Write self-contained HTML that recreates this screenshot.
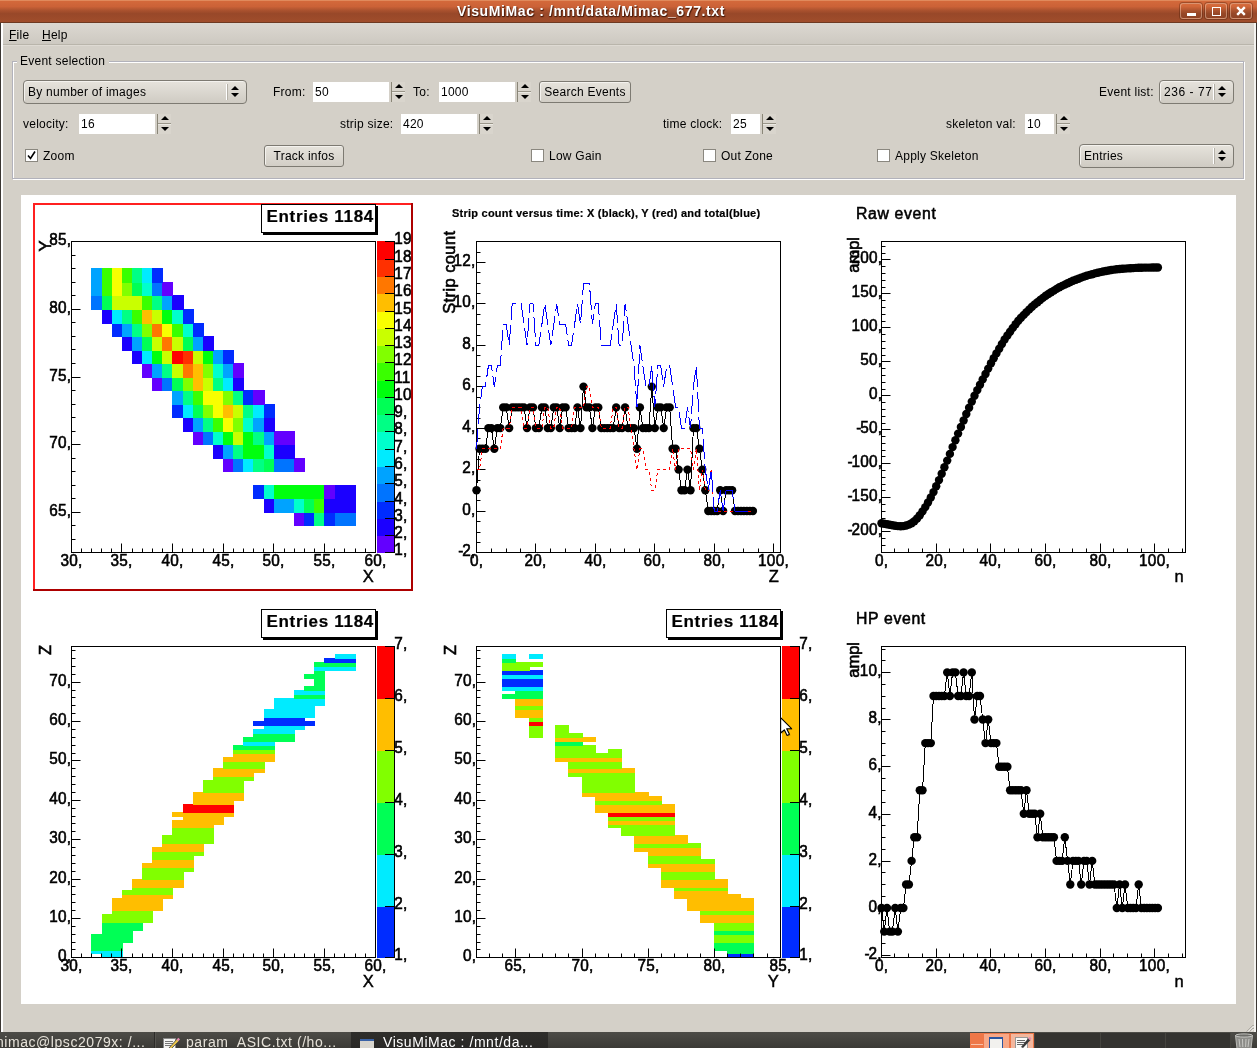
<!DOCTYPE html><html><head><meta charset="utf-8"><title>VisuMiMac</title><style>
html,body{margin:0;padding:0}
html{overflow:hidden;width:1257px;height:1048px}
body{width:1257px;height:1048px;position:relative;overflow:hidden;background:#d4d0c8;font-family:"Liberation Sans",sans-serif;font-size:12px;color:#000;letter-spacing:.25px}
.abs{position:absolute}
.lbl{position:absolute;white-space:pre;line-height:14px;height:14px}
.spin{position:absolute;height:20px;background:#fff}
.spin span{position:absolute;left:2px;top:3px;line-height:14px}
.arr{position:absolute;width:15px;height:20px}
.arr em{position:absolute;left:1px;top:0;width:13px;height:20px;background:#d9d5cd}
.arr i{position:absolute;left:4px;width:0;height:0;border-left:4px solid transparent;border-right:4px solid transparent}
.arr i.u{top:2px;border-bottom:4px solid #000}
.arr i.d{top:13px;border-top:4px solid #000}
.arr b{position:absolute;left:0;top:0;width:1px;height:20px;background:#8a8678}
.arr s{position:absolute;left:1px;top:9px;width:13px;height:1px;background:#9a968a}
.arr u{position:absolute;left:1px;top:10px;width:13px;height:1px;background:#eceae4}
.btn{position:absolute;box-sizing:border-box;border:1px solid #7d7a72;border-radius:3px;background:linear-gradient(#e6e3dc,#d2cec6);text-align:center;line-height:20px;box-shadow:inset 1px 1px 0 #f4f2ee}
.combo{position:absolute;box-sizing:border-box;border:1px solid #7d7a72;border-radius:4px;background:linear-gradient(#e6e3dc,#cfcbc3);box-shadow:inset 1px 1px 0 #f4f2ee}
.combo span{position:absolute;left:4px;top:4px;line-height:14px;white-space:pre}
.combo .sep{position:absolute;top:3px;bottom:3px;width:1px;background:#fff;border-right:1px solid #b5b1a8}
.combo i{position:absolute;width:0;height:0;border-left:4px solid transparent;border-right:4px solid transparent}
.combo i.u{border-bottom:4px solid #000}
.combo i.d{border-top:4px solid #000}
.chk{position:absolute;width:13px;height:13px;box-sizing:border-box;background:#fff;border:1px solid #8a877f}
</style></head><body><div id="w" style="position:absolute;left:0;top:0;width:1257px;height:1048px;overflow:hidden;will-change:transform">
<div class="abs" style="left:0;top:0;width:1257px;height:22px;background:linear-gradient(#d56a3b 0,#cb6237 30%,#a9512e 48%,#984829 62%,#a04d2b 100%)"></div>
<div class="abs" style="left:0;top:0;width:1257px;height:1px;background:#e08a5c"></div>
<div class="abs" style="left:0;top:1.5px;width:1182px;height:18px;text-align:center;color:#fff;font-weight:700;font-size:14px;line-height:18px;letter-spacing:.62px;text-shadow:1px 1px 1px #4a1c0c,0 1px 1px #4a1c0c">VisuMiMac : /mnt/data/Mimac_677.txt</div>
<div class="abs" style="left:1180px;top:3px;width:22px;height:16px;box-sizing:border-box;border:1px solid rgba(255,225,200,.42);border-radius:3px;background:linear-gradient(rgba(255,140,80,.18),rgba(60,20,0,.12));box-shadow:0 0 0 1px rgba(70,25,5,.35)"></div>
<div class="abs" style="left:1205px;top:3px;width:22px;height:16px;box-sizing:border-box;border:1px solid rgba(255,225,200,.42);border-radius:3px;background:linear-gradient(rgba(255,140,80,.18),rgba(60,20,0,.12));box-shadow:0 0 0 1px rgba(70,25,5,.35)"></div>
<div class="abs" style="left:1230px;top:3px;width:22px;height:16px;box-sizing:border-box;border:1px solid rgba(255,225,200,.42);border-radius:3px;background:linear-gradient(rgba(255,140,80,.18),rgba(60,20,0,.12));box-shadow:0 0 0 1px rgba(70,25,5,.35)"></div>
<div class="abs" style="left:1186.5px;top:12.5px;width:9px;height:3px;background:#fff"></div>
<div class="abs" style="left:1211.5px;top:7px;width:9px;height:8.5px;box-sizing:border-box;border:1.5px solid #fff"></div>
<svg class="abs" style="left:1235px;top:5px" width="12" height="12"><path d="M2.2 2.2 L9.8 9.8 M9.8 2.2 L2.2 9.8" stroke="#fff" stroke-width="2.4"/></svg>
<div class="abs" style="left:0;top:22px;width:1px;height:1010px;background:#3a3632"></div>
<div class="abs" style="left:1px;top:23px;width:2px;height:1009px;background:#fff"></div>
<div class="abs" style="left:1254px;top:23px;width:2px;height:1009px;background:#f4f3f0"></div>
<div class="abs" style="left:1256px;top:22px;width:1px;height:1010px;background:#3a3632"></div>
<div class="abs" style="left:0;top:22px;width:1257px;height:1px;background:#6e3a22"></div>
<div class="abs" style="left:3px;top:23px;width:1251px;height:21px;background:linear-gradient(#dcd8d1,#cdc9c1)"></div>
<div class="lbl" style="left:9px;top:28px"><u>F</u>ile</div>
<div class="lbl" style="left:42px;top:28px"><u>H</u>elp</div>
<div class="abs" style="left:3px;top:44px;width:1251px;height:1px;background:#b9b5ab"></div>
<div class="abs" style="left:3px;top:45px;width:1251px;height:1px;background:#dedad3"></div>
<div class="abs" style="left:12px;top:61px;width:1232px;height:118px;box-sizing:border-box;border:1px solid #b2b2bb;box-shadow:1px 1px 0 #fff, inset 1px 1px 0 #fff"></div>
<div class="lbl" style="left:17px;top:54px;padding:0 4px 0 3px;background:#d4d0c8">Event selection</div>
<div class="combo" style="left:23px;top:80px;width:224px;height:24px"><span>By number of images</span><div class="sep" style="left:202px"></div><i class="u" style="left:207px;top:5px"></i><i class="d" style="left:207px;top:12px"></i></div>
<div class="lbl" style="left:273px;top:85px">From:</div>
<div class="spin" style="left:313px;top:82px;width:76px"><span>50</span></div>
<div class="arr" style="left:391px;top:82px"><em></em><b></b><u></u><s></s><i class="u"></i><i class="d"></i></div>
<div class="lbl" style="left:413px;top:85px">To:</div>
<div class="spin" style="left:439px;top:82px;width:76px"><span>1000</span></div>
<div class="arr" style="left:517px;top:82px"><em></em><b></b><u></u><s></s><i class="u"></i><i class="d"></i></div>
<div class="btn" style="left:539px;top:81px;width:92px;height:22px;line-height:20px">Search Events</div>
<div class="lbl" style="left:1099px;top:85px">Event list:</div>
<div class="combo" style="left:1159px;top:80px;width:75px;height:24px"><span><span style="position:static;letter-spacing:.55px">236 - 77</span></span><div class="sep" style="left:53px"></div><i class="u" style="left:58px;top:5px"></i><i class="d" style="left:58px;top:12px"></i></div>
<div class="lbl" style="left:23px;top:117px">velocity:</div>
<div class="spin" style="left:79px;top:114px;width:76px"><span>16</span></div>
<div class="arr" style="left:157px;top:114px"><em></em><b></b><u></u><s></s><i class="u"></i><i class="d"></i></div>
<div class="lbl" style="left:340px;top:117px">strip size:</div>
<div class="spin" style="left:401px;top:114px;width:76px"><span>420</span></div>
<div class="arr" style="left:479px;top:114px"><em></em><b></b><u></u><s></s><i class="u"></i><i class="d"></i></div>
<div class="lbl" style="left:663px;top:117px">time clock:</div>
<div class="spin" style="left:731px;top:114px;width:29px"><span>25</span></div>
<div class="arr" style="left:762px;top:114px"><em></em><b></b><u></u><s></s><i class="u"></i><i class="d"></i></div>
<div class="lbl" style="left:946px;top:117px">skeleton val:</div>
<div class="spin" style="left:1025px;top:114px;width:29px"><span>10</span></div>
<div class="arr" style="left:1056px;top:114px"><em></em><b></b><u></u><s></s><i class="u"></i><i class="d"></i></div>
<div class="chk" style="left:25px;top:149px"><svg width="11" height="11" style="position:absolute;left:0;top:0"><path d="M2 5.5 L4.5 8.5 L9 1.5" stroke="#000" stroke-width="1.6" fill="none"/></svg></div>
<div class="lbl" style="left:43px;top:149px">Zoom</div>
<div class="btn" style="left:264px;top:145px;width:80px;height:22px;line-height:20px">Track infos</div>
<div class="chk" style="left:531px;top:149px"></div>
<div class="lbl" style="left:549px;top:149px">Low Gain</div>
<div class="chk" style="left:703px;top:149px"></div>
<div class="lbl" style="left:721px;top:149px">Out Zone</div>
<div class="chk" style="left:877px;top:149px"></div>
<div class="lbl" style="left:895px;top:149px">Apply Skeleton</div>
<div class="combo" style="left:1079px;top:144px;width:155px;height:24px"><span>Entries</span><div class="sep" style="left:133px"></div><i class="u" style="left:138px;top:5px"></i><i class="d" style="left:138px;top:12px"></i></div>
<div class="abs" style="left:21px;top:195px;width:1215px;height:809px;background:#fff"></div>
<svg width="1257" height="1048" viewBox="0 0 1257 1048" style="position:absolute;left:0;top:0;font-family:'Liberation Sans', sans-serif" fill="#000"><defs>
<clipPath id="pad0"><rect x="33" y="203" width="378" height="390"/></clipPath>
<clipPath id="pad1"><rect x="438" y="203" width="380" height="390"/></clipPath>
<clipPath id="pad2"><rect x="843" y="203" width="380" height="390"/></clipPath>
<clipPath id="pad3"><rect x="33" y="607" width="380" height="390"/></clipPath>
<clipPath id="pad4"><rect x="438" y="607" width="380" height="390"/></clipPath>
<clipPath id="pad5"><rect x="843" y="607" width="380" height="390"/></clipPath>
</defs>
<g shape-rendering="crispEdges">
<rect x="33" y="203" width="380" height="388" fill="#fff" />
<rect x="33" y="203" width="380" height="2" fill="#ff2020" />
<rect x="33" y="203" width="2" height="388" fill="#ff2020" />
<rect x="33" y="589" width="380" height="2" fill="#ad0000" />
<rect x="411" y="203" width="2" height="388" fill="#ad0000" />
</g>
<rect x="71.5" y="241.5" width="304" height="311" fill="#fff" stroke="#000" stroke-width="1"/>
<g shape-rendering="crispEdges">
<rect x="294" y="512" width="11" height="14" fill="#6300ff" />
<rect x="304" y="512" width="11" height="14" fill="#002cff" />
<rect x="314" y="512" width="11" height="14" fill="#00ff85" />
<rect x="324" y="512" width="12" height="14" fill="#002cff" />
<rect x="335" y="512" width="11" height="14" fill="#0074ff" />
<rect x="345" y="512" width="11" height="14" fill="#0074ff" />
<rect x="264" y="498" width="11" height="15" fill="#1b00ff" />
<rect x="274" y="498" width="11" height="15" fill="#00a3ff" />
<rect x="284" y="498" width="11" height="15" fill="#00a3ff" />
<rect x="294" y="498" width="11" height="15" fill="#00ffcc" />
<rect x="304" y="498" width="11" height="15" fill="#00ff55" />
<rect x="314" y="498" width="11" height="15" fill="#3aff00" />
<rect x="324" y="498" width="12" height="15" fill="#1b00ff" />
<rect x="335" y="498" width="11" height="15" fill="#1b00ff" />
<rect x="345" y="498" width="11" height="15" fill="#1b00ff" />
<rect x="253" y="485" width="12" height="14" fill="#002cff" />
<rect x="264" y="485" width="11" height="14" fill="#00ffcc" />
<rect x="274" y="485" width="11" height="14" fill="#00ff0e" />
<rect x="284" y="485" width="11" height="14" fill="#00ff0e" />
<rect x="294" y="485" width="11" height="14" fill="#00ff0e" />
<rect x="304" y="485" width="11" height="14" fill="#00ff0e" />
<rect x="314" y="485" width="11" height="14" fill="#00ff0e" />
<rect x="324" y="485" width="12" height="14" fill="#6300ff" />
<rect x="335" y="485" width="11" height="14" fill="#1b00ff" />
<rect x="345" y="485" width="11" height="14" fill="#1b00ff" />
<rect x="223" y="458" width="11" height="14" fill="#6300ff" />
<rect x="233" y="458" width="11" height="14" fill="#0074ff" />
<rect x="243" y="458" width="11" height="14" fill="#00ebff" />
<rect x="253" y="458" width="12" height="14" fill="#00ff85" />
<rect x="264" y="458" width="11" height="14" fill="#00ff55" />
<rect x="274" y="458" width="11" height="14" fill="#0074ff" />
<rect x="284" y="458" width="11" height="14" fill="#0074ff" />
<rect x="294" y="458" width="11" height="14" fill="#6300ff" />
<rect x="213" y="444" width="11" height="15" fill="#1b00ff" />
<rect x="223" y="444" width="11" height="15" fill="#00a3ff" />
<rect x="233" y="444" width="11" height="15" fill="#00ff85" />
<rect x="243" y="444" width="11" height="15" fill="#00ff0e" />
<rect x="253" y="444" width="12" height="15" fill="#00ff0e" />
<rect x="264" y="444" width="11" height="15" fill="#00ffcc" />
<rect x="274" y="444" width="11" height="15" fill="#1b00ff" />
<rect x="284" y="444" width="11" height="15" fill="#1b00ff" />
<rect x="193" y="431" width="11" height="14" fill="#6300ff" />
<rect x="203" y="431" width="11" height="14" fill="#0074ff" />
<rect x="213" y="431" width="11" height="14" fill="#00ffcc" />
<rect x="223" y="431" width="11" height="14" fill="#00ff0e" />
<rect x="233" y="431" width="11" height="14" fill="#c9ff00" />
<rect x="243" y="431" width="11" height="14" fill="#00ff0e" />
<rect x="253" y="431" width="12" height="14" fill="#00ff85" />
<rect x="264" y="431" width="11" height="14" fill="#00a3ff" />
<rect x="274" y="431" width="11" height="14" fill="#6300ff" />
<rect x="284" y="431" width="11" height="14" fill="#6300ff" />
<rect x="183" y="417" width="11" height="15" fill="#1b00ff" />
<rect x="193" y="417" width="11" height="15" fill="#00a3ff" />
<rect x="203" y="417" width="11" height="15" fill="#00ff85" />
<rect x="213" y="417" width="11" height="15" fill="#3aff00" />
<rect x="223" y="417" width="11" height="15" fill="#f8ff00" />
<rect x="233" y="417" width="11" height="15" fill="#81ff00" />
<rect x="243" y="417" width="11" height="15" fill="#00ffcc" />
<rect x="253" y="417" width="12" height="15" fill="#00a3ff" />
<rect x="264" y="417" width="11" height="15" fill="#1b00ff" />
<rect x="172" y="404" width="12" height="14" fill="#002cff" />
<rect x="183" y="404" width="11" height="14" fill="#00ebff" />
<rect x="193" y="404" width="11" height="14" fill="#00ff55" />
<rect x="203" y="404" width="11" height="14" fill="#81ff00" />
<rect x="213" y="404" width="11" height="14" fill="#f8ff00" />
<rect x="223" y="404" width="11" height="14" fill="#ffbe00" />
<rect x="233" y="404" width="11" height="14" fill="#c9ff00" />
<rect x="243" y="404" width="11" height="14" fill="#00ff85" />
<rect x="253" y="404" width="12" height="14" fill="#00ebff" />
<rect x="264" y="404" width="11" height="14" fill="#002cff" />
<rect x="172" y="390" width="12" height="15" fill="#00a3ff" />
<rect x="183" y="390" width="11" height="15" fill="#00ff85" />
<rect x="193" y="390" width="11" height="15" fill="#3aff00" />
<rect x="203" y="390" width="11" height="15" fill="#f8ff00" />
<rect x="213" y="390" width="11" height="15" fill="#f8ff00" />
<rect x="223" y="390" width="11" height="15" fill="#81ff00" />
<rect x="233" y="390" width="11" height="15" fill="#00ff85" />
<rect x="243" y="390" width="11" height="15" fill="#002cff" />
<rect x="253" y="390" width="12" height="15" fill="#6300ff" />
<rect x="152" y="377" width="11" height="14" fill="#6300ff" />
<rect x="162" y="377" width="11" height="14" fill="#0074ff" />
<rect x="172" y="377" width="12" height="14" fill="#00ff55" />
<rect x="183" y="377" width="11" height="14" fill="#81ff00" />
<rect x="193" y="377" width="11" height="14" fill="#ffbe00" />
<rect x="203" y="377" width="11" height="14" fill="#c9ff00" />
<rect x="213" y="377" width="11" height="14" fill="#00ff85" />
<rect x="223" y="377" width="11" height="14" fill="#00ebff" />
<rect x="233" y="377" width="11" height="14" fill="#1b00ff" />
<rect x="142" y="363" width="11" height="15" fill="#6300ff" />
<rect x="152" y="363" width="11" height="15" fill="#00a3ff" />
<rect x="162" y="363" width="11" height="15" fill="#00ff85" />
<rect x="172" y="363" width="12" height="15" fill="#c9ff00" />
<rect x="183" y="363" width="11" height="15" fill="#ff7700" />
<rect x="193" y="363" width="11" height="15" fill="#ffbe00" />
<rect x="203" y="363" width="11" height="15" fill="#81ff00" />
<rect x="213" y="363" width="11" height="15" fill="#00ffcc" />
<rect x="223" y="363" width="11" height="15" fill="#00a3ff" />
<rect x="233" y="363" width="11" height="15" fill="#6300ff" />
<rect x="132" y="350" width="11" height="14" fill="#1b00ff" />
<rect x="142" y="350" width="11" height="14" fill="#00ebff" />
<rect x="152" y="350" width="11" height="14" fill="#00ff0e" />
<rect x="162" y="350" width="11" height="14" fill="#c9ff00" />
<rect x="172" y="350" width="12" height="14" fill="#ff0000" />
<rect x="183" y="350" width="11" height="14" fill="#ff3000" />
<rect x="193" y="350" width="11" height="14" fill="#c9ff00" />
<rect x="203" y="350" width="11" height="14" fill="#00ff0e" />
<rect x="213" y="350" width="11" height="14" fill="#00a3ff" />
<rect x="223" y="350" width="11" height="14" fill="#002cff" />
<rect x="122" y="336" width="11" height="15" fill="#1b00ff" />
<rect x="132" y="336" width="11" height="15" fill="#00a3ff" />
<rect x="142" y="336" width="11" height="15" fill="#00ff55" />
<rect x="152" y="336" width="11" height="15" fill="#c9ff00" />
<rect x="162" y="336" width="11" height="15" fill="#ff7700" />
<rect x="172" y="336" width="12" height="15" fill="#c9ff00" />
<rect x="183" y="336" width="11" height="15" fill="#00ff55" />
<rect x="193" y="336" width="11" height="15" fill="#00a3ff" />
<rect x="203" y="336" width="11" height="15" fill="#1b00ff" />
<rect x="112" y="323" width="11" height="14" fill="#002cff" />
<rect x="122" y="323" width="11" height="14" fill="#00a3ff" />
<rect x="132" y="323" width="11" height="14" fill="#00ff85" />
<rect x="142" y="323" width="11" height="14" fill="#81ff00" />
<rect x="152" y="323" width="11" height="14" fill="#ff7700" />
<rect x="162" y="323" width="11" height="14" fill="#f8ff00" />
<rect x="172" y="323" width="12" height="14" fill="#3aff00" />
<rect x="183" y="323" width="11" height="14" fill="#00ffcc" />
<rect x="193" y="323" width="11" height="14" fill="#002cff" />
<rect x="102" y="309" width="11" height="15" fill="#1b00ff" />
<rect x="112" y="309" width="11" height="15" fill="#00ebff" />
<rect x="122" y="309" width="11" height="15" fill="#00ff85" />
<rect x="132" y="309" width="11" height="15" fill="#3aff00" />
<rect x="142" y="309" width="11" height="15" fill="#ffbe00" />
<rect x="152" y="309" width="11" height="15" fill="#c9ff00" />
<rect x="162" y="309" width="11" height="15" fill="#00ff0e" />
<rect x="172" y="309" width="12" height="15" fill="#00ffcc" />
<rect x="183" y="309" width="11" height="15" fill="#002cff" />
<rect x="91" y="295" width="12" height="15" fill="#0074ff" />
<rect x="102" y="295" width="11" height="15" fill="#00ff55" />
<rect x="112" y="295" width="11" height="15" fill="#c9ff00" />
<rect x="122" y="295" width="11" height="15" fill="#c9ff00" />
<rect x="132" y="295" width="11" height="15" fill="#c9ff00" />
<rect x="142" y="295" width="11" height="15" fill="#3aff00" />
<rect x="152" y="295" width="11" height="15" fill="#00ff85" />
<rect x="162" y="295" width="11" height="15" fill="#00a3ff" />
<rect x="172" y="295" width="12" height="15" fill="#1b00ff" />
<rect x="91" y="282" width="12" height="14" fill="#00a3ff" />
<rect x="102" y="282" width="11" height="14" fill="#3aff00" />
<rect x="112" y="282" width="11" height="14" fill="#f8ff00" />
<rect x="122" y="282" width="11" height="14" fill="#81ff00" />
<rect x="132" y="282" width="11" height="14" fill="#00ff55" />
<rect x="142" y="282" width="11" height="14" fill="#00ffcc" />
<rect x="152" y="282" width="11" height="14" fill="#0074ff" />
<rect x="162" y="282" width="11" height="14" fill="#6300ff" />
<rect x="91" y="268" width="12" height="15" fill="#00a3ff" />
<rect x="102" y="268" width="11" height="15" fill="#3aff00" />
<rect x="112" y="268" width="11" height="15" fill="#f8ff00" />
<rect x="122" y="268" width="11" height="15" fill="#3aff00" />
<rect x="132" y="268" width="11" height="15" fill="#00ff85" />
<rect x="142" y="268" width="11" height="15" fill="#00ebff" />
<rect x="152" y="268" width="11" height="15" fill="#002cff" />
</g>
<rect x="71.5" y="241.5" width="304" height="311" fill="none" stroke="#000" stroke-width="1"/>
<line x1="71.5" y1="552.5" x2="71.5" y2="543.5" stroke="#000" stroke-width="1" />
<text transform="translate(71.5,566) scale(0.93,1)" font-size="16.5" text-anchor="middle" stroke="#000" stroke-width="0.6">30,</text>
<line x1="81.5" y1="552.5" x2="81.5" y2="548.5" stroke="#000" stroke-width="1" />
<line x1="91.5" y1="552.5" x2="91.5" y2="548.5" stroke="#000" stroke-width="1" />
<line x1="101.5" y1="552.5" x2="101.5" y2="548.5" stroke="#000" stroke-width="1" />
<line x1="111.5" y1="552.5" x2="111.5" y2="548.5" stroke="#000" stroke-width="1" />
<line x1="121.5" y1="552.5" x2="121.5" y2="543.5" stroke="#000" stroke-width="1" />
<text transform="translate(121.5,566) scale(0.93,1)" font-size="16.5" text-anchor="middle" stroke="#000" stroke-width="0.6">35,</text>
<line x1="132.5" y1="552.5" x2="132.5" y2="548.5" stroke="#000" stroke-width="1" />
<line x1="142.5" y1="552.5" x2="142.5" y2="548.5" stroke="#000" stroke-width="1" />
<line x1="152.5" y1="552.5" x2="152.5" y2="548.5" stroke="#000" stroke-width="1" />
<line x1="162.5" y1="552.5" x2="162.5" y2="548.5" stroke="#000" stroke-width="1" />
<line x1="172.5" y1="552.5" x2="172.5" y2="543.5" stroke="#000" stroke-width="1" />
<text transform="translate(172.5,566) scale(0.93,1)" font-size="16.5" text-anchor="middle" stroke="#000" stroke-width="0.6">40,</text>
<line x1="182.5" y1="552.5" x2="182.5" y2="548.5" stroke="#000" stroke-width="1" />
<line x1="192.5" y1="552.5" x2="192.5" y2="548.5" stroke="#000" stroke-width="1" />
<line x1="203.5" y1="552.5" x2="203.5" y2="548.5" stroke="#000" stroke-width="1" />
<line x1="213.5" y1="552.5" x2="213.5" y2="548.5" stroke="#000" stroke-width="1" />
<line x1="223.5" y1="552.5" x2="223.5" y2="543.5" stroke="#000" stroke-width="1" />
<text transform="translate(223.5,566) scale(0.93,1)" font-size="16.5" text-anchor="middle" stroke="#000" stroke-width="0.6">45,</text>
<line x1="233.5" y1="552.5" x2="233.5" y2="548.5" stroke="#000" stroke-width="1" />
<line x1="243.5" y1="552.5" x2="243.5" y2="548.5" stroke="#000" stroke-width="1" />
<line x1="253.5" y1="552.5" x2="253.5" y2="548.5" stroke="#000" stroke-width="1" />
<line x1="263.5" y1="552.5" x2="263.5" y2="548.5" stroke="#000" stroke-width="1" />
<line x1="273.5" y1="552.5" x2="273.5" y2="543.5" stroke="#000" stroke-width="1" />
<text transform="translate(273.5,566) scale(0.93,1)" font-size="16.5" text-anchor="middle" stroke="#000" stroke-width="0.6">50,</text>
<line x1="284.5" y1="552.5" x2="284.5" y2="548.5" stroke="#000" stroke-width="1" />
<line x1="294.5" y1="552.5" x2="294.5" y2="548.5" stroke="#000" stroke-width="1" />
<line x1="304.5" y1="552.5" x2="304.5" y2="548.5" stroke="#000" stroke-width="1" />
<line x1="314.5" y1="552.5" x2="314.5" y2="548.5" stroke="#000" stroke-width="1" />
<line x1="324.5" y1="552.5" x2="324.5" y2="543.5" stroke="#000" stroke-width="1" />
<text transform="translate(324.5,566) scale(0.93,1)" font-size="16.5" text-anchor="middle" stroke="#000" stroke-width="0.6">55,</text>
<line x1="334.5" y1="552.5" x2="334.5" y2="548.5" stroke="#000" stroke-width="1" />
<line x1="344.5" y1="552.5" x2="344.5" y2="548.5" stroke="#000" stroke-width="1" />
<line x1="355.5" y1="552.5" x2="355.5" y2="548.5" stroke="#000" stroke-width="1" />
<line x1="365.5" y1="552.5" x2="365.5" y2="548.5" stroke="#000" stroke-width="1" />
<line x1="375.5" y1="552.5" x2="375.5" y2="543.5" stroke="#000" stroke-width="1" />
<text transform="translate(375.5,566) scale(0.93,1)" font-size="16.5" text-anchor="middle" stroke="#000" stroke-width="0.6">60,</text>
<text x="374" y="582" font-size="16.5" text-anchor="end" stroke="#000" stroke-width="0.45">X</text>
<line x1="71.5" y1="552.5" x2="75.5" y2="552.5" stroke="#000" stroke-width="1" />
<line x1="71.5" y1="539.5" x2="75.5" y2="539.5" stroke="#000" stroke-width="1" />
<line x1="71.5" y1="525.5" x2="75.5" y2="525.5" stroke="#000" stroke-width="1" />
<line x1="71.5" y1="512.5" x2="80.5" y2="512.5" stroke="#000" stroke-width="1" />
<text transform="translate(71.2,515.7) scale(0.93,1)" font-size="16.5" text-anchor="end" stroke="#000" stroke-width="0.6">65,</text>
<line x1="71.5" y1="498.5" x2="75.5" y2="498.5" stroke="#000" stroke-width="1" />
<line x1="71.5" y1="485.5" x2="75.5" y2="485.5" stroke="#000" stroke-width="1" />
<line x1="71.5" y1="471.5" x2="75.5" y2="471.5" stroke="#000" stroke-width="1" />
<line x1="71.5" y1="458.5" x2="75.5" y2="458.5" stroke="#000" stroke-width="1" />
<line x1="71.5" y1="444.5" x2="80.5" y2="444.5" stroke="#000" stroke-width="1" />
<text transform="translate(71.2,447.7) scale(0.93,1)" font-size="16.5" text-anchor="end" stroke="#000" stroke-width="0.6">70,</text>
<line x1="71.5" y1="431.5" x2="75.5" y2="431.5" stroke="#000" stroke-width="1" />
<line x1="71.5" y1="417.5" x2="75.5" y2="417.5" stroke="#000" stroke-width="1" />
<line x1="71.5" y1="404.5" x2="75.5" y2="404.5" stroke="#000" stroke-width="1" />
<line x1="71.5" y1="390.5" x2="75.5" y2="390.5" stroke="#000" stroke-width="1" />
<line x1="71.5" y1="377.5" x2="80.5" y2="377.5" stroke="#000" stroke-width="1" />
<text transform="translate(71.2,380.7) scale(0.93,1)" font-size="16.5" text-anchor="end" stroke="#000" stroke-width="0.6">75,</text>
<line x1="71.5" y1="363.5" x2="75.5" y2="363.5" stroke="#000" stroke-width="1" />
<line x1="71.5" y1="349.5" x2="75.5" y2="349.5" stroke="#000" stroke-width="1" />
<line x1="71.5" y1="336.5" x2="75.5" y2="336.5" stroke="#000" stroke-width="1" />
<line x1="71.5" y1="322.5" x2="75.5" y2="322.5" stroke="#000" stroke-width="1" />
<line x1="71.5" y1="309.5" x2="80.5" y2="309.5" stroke="#000" stroke-width="1" />
<text transform="translate(71.2,312.7) scale(0.93,1)" font-size="16.5" text-anchor="end" stroke="#000" stroke-width="0.6">80,</text>
<line x1="71.5" y1="295.5" x2="75.5" y2="295.5" stroke="#000" stroke-width="1" />
<line x1="71.5" y1="282.5" x2="75.5" y2="282.5" stroke="#000" stroke-width="1" />
<line x1="71.5" y1="268.5" x2="75.5" y2="268.5" stroke="#000" stroke-width="1" />
<line x1="71.5" y1="255.5" x2="75.5" y2="255.5" stroke="#000" stroke-width="1" />
<line x1="71.5" y1="241.5" x2="80.5" y2="241.5" stroke="#000" stroke-width="1" />
<text transform="translate(71.2,244.7) scale(0.93,1)" font-size="16.5" text-anchor="end" stroke="#000" stroke-width="0.6">85,</text>
<text transform="translate(50.5,240.5) rotate(-90)" font-size="16.5" text-anchor="end" stroke="#000" stroke-width="0.6" letter-spacing="0">Y</text>
<g shape-rendering="crispEdges">
<rect x="377" y="535" width="17" height="18" fill="#6300ff" />
<rect x="377" y="518" width="17" height="18" fill="#1b00ff" />
<rect x="377" y="501" width="17" height="18" fill="#002cff" />
<rect x="377" y="483" width="17" height="19" fill="#0074ff" />
<rect x="377" y="466" width="17" height="18" fill="#00a3ff" />
<rect x="377" y="449" width="17" height="18" fill="#00ebff" />
<rect x="377" y="431" width="17" height="19" fill="#00ffcc" />
<rect x="377" y="414" width="17" height="18" fill="#00ff85" />
<rect x="377" y="397" width="17" height="18" fill="#00ff55" />
<rect x="377" y="380" width="17" height="18" fill="#00ff0e" />
<rect x="377" y="362" width="17" height="19" fill="#3aff00" />
<rect x="377" y="345" width="17" height="18" fill="#81ff00" />
<rect x="377" y="328" width="17" height="18" fill="#c9ff00" />
<rect x="377" y="311" width="17" height="18" fill="#f8ff00" />
<rect x="377" y="293" width="17" height="19" fill="#ffbe00" />
<rect x="377" y="276" width="17" height="18" fill="#ff7700" />
<rect x="377" y="259" width="17" height="18" fill="#ff3000" />
<rect x="377" y="241" width="17" height="19" fill="#ff0000" />
</g>
<line x1="394.5" y1="241" x2="394.5" y2="553" stroke="#000" stroke-width="1" />
<g clip-path="url(#pad0)">
<line x1="385" y1="552.5" x2="394.5" y2="552.5" stroke="#000" stroke-width="1" />
<text transform="translate(394.2,555.4) scale(0.93,1)" font-size="16.5" text-anchor="start" stroke="#000" stroke-width="0.6">1,</text>
<line x1="385" y1="535.5" x2="394.5" y2="535.5" stroke="#000" stroke-width="1" />
<text transform="translate(394.2,538.4) scale(0.93,1)" font-size="16.5" text-anchor="start" stroke="#000" stroke-width="0.6">2,</text>
<line x1="385" y1="518.5" x2="394.5" y2="518.5" stroke="#000" stroke-width="1" />
<text transform="translate(394.2,521.4) scale(0.93,1)" font-size="16.5" text-anchor="start" stroke="#000" stroke-width="0.6">3,</text>
<line x1="385" y1="501.5" x2="394.5" y2="501.5" stroke="#000" stroke-width="1" />
<text transform="translate(394.2,504.4) scale(0.93,1)" font-size="16.5" text-anchor="start" stroke="#000" stroke-width="0.6">4,</text>
<line x1="385" y1="483.5" x2="394.5" y2="483.5" stroke="#000" stroke-width="1" />
<text transform="translate(394.2,486.4) scale(0.93,1)" font-size="16.5" text-anchor="start" stroke="#000" stroke-width="0.6">5,</text>
<line x1="385" y1="466.5" x2="394.5" y2="466.5" stroke="#000" stroke-width="1" />
<text transform="translate(394.2,469.4) scale(0.93,1)" font-size="16.5" text-anchor="start" stroke="#000" stroke-width="0.6">6,</text>
<line x1="385" y1="449.5" x2="394.5" y2="449.5" stroke="#000" stroke-width="1" />
<text transform="translate(394.2,452.4) scale(0.93,1)" font-size="16.5" text-anchor="start" stroke="#000" stroke-width="0.6">7,</text>
<line x1="385" y1="431.5" x2="394.5" y2="431.5" stroke="#000" stroke-width="1" />
<text transform="translate(394.2,434.4) scale(0.93,1)" font-size="16.5" text-anchor="start" stroke="#000" stroke-width="0.6">8,</text>
<line x1="385" y1="414.5" x2="394.5" y2="414.5" stroke="#000" stroke-width="1" />
<text transform="translate(394.2,417.4) scale(0.93,1)" font-size="16.5" text-anchor="start" stroke="#000" stroke-width="0.6">9,</text>
<line x1="385" y1="397.5" x2="394.5" y2="397.5" stroke="#000" stroke-width="1" />
<text transform="translate(394.2,400.4) scale(0.93,1)" font-size="16.5" text-anchor="start" stroke="#000" stroke-width="0.6">10</text>
<line x1="385" y1="380.5" x2="394.5" y2="380.5" stroke="#000" stroke-width="1" />
<text transform="translate(394.2,383.4) scale(0.93,1)" font-size="16.5" text-anchor="start" stroke="#000" stroke-width="0.6">11</text>
<line x1="385" y1="362.5" x2="394.5" y2="362.5" stroke="#000" stroke-width="1" />
<text transform="translate(394.2,365.4) scale(0.93,1)" font-size="16.5" text-anchor="start" stroke="#000" stroke-width="0.6">12</text>
<line x1="385" y1="345.5" x2="394.5" y2="345.5" stroke="#000" stroke-width="1" />
<text transform="translate(394.2,348.4) scale(0.93,1)" font-size="16.5" text-anchor="start" stroke="#000" stroke-width="0.6">13</text>
<line x1="385" y1="328.5" x2="394.5" y2="328.5" stroke="#000" stroke-width="1" />
<text transform="translate(394.2,331.4) scale(0.93,1)" font-size="16.5" text-anchor="start" stroke="#000" stroke-width="0.6">14</text>
<line x1="385" y1="311.5" x2="394.5" y2="311.5" stroke="#000" stroke-width="1" />
<text transform="translate(394.2,314.4) scale(0.93,1)" font-size="16.5" text-anchor="start" stroke="#000" stroke-width="0.6">15</text>
<line x1="385" y1="293.5" x2="394.5" y2="293.5" stroke="#000" stroke-width="1" />
<text transform="translate(394.2,296.4) scale(0.93,1)" font-size="16.5" text-anchor="start" stroke="#000" stroke-width="0.6">16</text>
<line x1="385" y1="276.5" x2="394.5" y2="276.5" stroke="#000" stroke-width="1" />
<text transform="translate(394.2,279.4) scale(0.93,1)" font-size="16.5" text-anchor="start" stroke="#000" stroke-width="0.6">17</text>
<line x1="385" y1="259.5" x2="394.5" y2="259.5" stroke="#000" stroke-width="1" />
<text transform="translate(394.2,262.4) scale(0.93,1)" font-size="16.5" text-anchor="start" stroke="#000" stroke-width="0.6">18</text>
<line x1="385" y1="241.5" x2="394.5" y2="241.5" stroke="#000" stroke-width="1" />
<text transform="translate(394.2,244.4) scale(0.93,1)" font-size="16.5" text-anchor="start" stroke="#000" stroke-width="0.6">19</text>
</g>
<rect x="263" y="206" width="115" height="29" fill="#000" shape-rendering="crispEdges"/>
<rect x="261.5" y="204.5" width="114" height="28" fill="#fff" stroke="#000" stroke-width="1"/>
<text x="266.5" y="221.7" font-size="17" text-anchor="start" font-weight="700" letter-spacing="0.68" stroke="#000" stroke-width="0.2" >Entries 1184</text>
<rect x="476.5" y="241.5" width="304" height="311" fill="#fff" stroke="#000" stroke-width="1"/>
<line x1="476.5" y1="552.5" x2="476.5" y2="543.5" stroke="#000" stroke-width="1" />
<text transform="translate(476.5,566) scale(0.93,1)" font-size="16.5" text-anchor="middle" stroke="#000" stroke-width="0.6">0,</text>
<line x1="491.5" y1="552.5" x2="491.5" y2="548.5" stroke="#000" stroke-width="1" />
<line x1="506.5" y1="552.5" x2="506.5" y2="548.5" stroke="#000" stroke-width="1" />
<line x1="520.5" y1="552.5" x2="520.5" y2="548.5" stroke="#000" stroke-width="1" />
<line x1="535.5" y1="552.5" x2="535.5" y2="543.5" stroke="#000" stroke-width="1" />
<text transform="translate(535.5,566) scale(0.93,1)" font-size="16.5" text-anchor="middle" stroke="#000" stroke-width="0.6">20,</text>
<line x1="550.5" y1="552.5" x2="550.5" y2="548.5" stroke="#000" stroke-width="1" />
<line x1="565.5" y1="552.5" x2="565.5" y2="548.5" stroke="#000" stroke-width="1" />
<line x1="580.5" y1="552.5" x2="580.5" y2="548.5" stroke="#000" stroke-width="1" />
<line x1="595.5" y1="552.5" x2="595.5" y2="543.5" stroke="#000" stroke-width="1" />
<text transform="translate(595.5,566) scale(0.93,1)" font-size="16.5" text-anchor="middle" stroke="#000" stroke-width="0.6">40,</text>
<line x1="610.5" y1="552.5" x2="610.5" y2="548.5" stroke="#000" stroke-width="1" />
<line x1="624.5" y1="552.5" x2="624.5" y2="548.5" stroke="#000" stroke-width="1" />
<line x1="639.5" y1="552.5" x2="639.5" y2="548.5" stroke="#000" stroke-width="1" />
<line x1="654.5" y1="552.5" x2="654.5" y2="543.5" stroke="#000" stroke-width="1" />
<text transform="translate(654.5,566) scale(0.93,1)" font-size="16.5" text-anchor="middle" stroke="#000" stroke-width="0.6">60,</text>
<line x1="669.5" y1="552.5" x2="669.5" y2="548.5" stroke="#000" stroke-width="1" />
<line x1="684.5" y1="552.5" x2="684.5" y2="548.5" stroke="#000" stroke-width="1" />
<line x1="699.5" y1="552.5" x2="699.5" y2="548.5" stroke="#000" stroke-width="1" />
<line x1="714.5" y1="552.5" x2="714.5" y2="543.5" stroke="#000" stroke-width="1" />
<text transform="translate(714.5,566) scale(0.93,1)" font-size="16.5" text-anchor="middle" stroke="#000" stroke-width="0.6">80,</text>
<line x1="728.5" y1="552.5" x2="728.5" y2="548.5" stroke="#000" stroke-width="1" />
<line x1="743.5" y1="552.5" x2="743.5" y2="548.5" stroke="#000" stroke-width="1" />
<line x1="758.5" y1="552.5" x2="758.5" y2="548.5" stroke="#000" stroke-width="1" />
<line x1="773.5" y1="552.5" x2="773.5" y2="543.5" stroke="#000" stroke-width="1" />
<text transform="translate(773.5,566) scale(0.93,1)" font-size="16.5" text-anchor="middle" stroke="#000" stroke-width="0.6">100,</text>
<text x="779" y="582" font-size="16.5" text-anchor="end" stroke="#000" stroke-width="0.45">Z</text>
<line x1="476.5" y1="552.5" x2="485.5" y2="552.5" stroke="#000" stroke-width="1" />
<text transform="translate(475.4,555.7) scale(0.93,1)" font-size="16.5" text-anchor="end" stroke="#000" stroke-width="0.6"><tspan letter-spacing="-1.2">-</tspan>2,</text>
<line x1="476.5" y1="542.5" x2="480.5" y2="542.5" stroke="#000" stroke-width="1" />
<line x1="476.5" y1="532.5" x2="480.5" y2="532.5" stroke="#000" stroke-width="1" />
<line x1="476.5" y1="521.5" x2="480.5" y2="521.5" stroke="#000" stroke-width="1" />
<line x1="476.5" y1="511.5" x2="485.5" y2="511.5" stroke="#000" stroke-width="1" />
<text transform="translate(475.4,514.7) scale(0.93,1)" font-size="16.5" text-anchor="end" stroke="#000" stroke-width="0.6">0,</text>
<line x1="476.5" y1="500.5" x2="480.5" y2="500.5" stroke="#000" stroke-width="1" />
<line x1="476.5" y1="490.5" x2="480.5" y2="490.5" stroke="#000" stroke-width="1" />
<line x1="476.5" y1="480.5" x2="480.5" y2="480.5" stroke="#000" stroke-width="1" />
<line x1="476.5" y1="469.5" x2="485.5" y2="469.5" stroke="#000" stroke-width="1" />
<text transform="translate(475.4,472.7) scale(0.93,1)" font-size="16.5" text-anchor="end" stroke="#000" stroke-width="0.6">2,</text>
<line x1="476.5" y1="459.5" x2="480.5" y2="459.5" stroke="#000" stroke-width="1" />
<line x1="476.5" y1="449.5" x2="480.5" y2="449.5" stroke="#000" stroke-width="1" />
<line x1="476.5" y1="438.5" x2="480.5" y2="438.5" stroke="#000" stroke-width="1" />
<line x1="476.5" y1="428.5" x2="485.5" y2="428.5" stroke="#000" stroke-width="1" />
<text transform="translate(475.4,431.7) scale(0.93,1)" font-size="16.5" text-anchor="end" stroke="#000" stroke-width="0.6">4,</text>
<line x1="476.5" y1="418.5" x2="480.5" y2="418.5" stroke="#000" stroke-width="1" />
<line x1="476.5" y1="407.5" x2="480.5" y2="407.5" stroke="#000" stroke-width="1" />
<line x1="476.5" y1="397.5" x2="480.5" y2="397.5" stroke="#000" stroke-width="1" />
<line x1="476.5" y1="386.5" x2="485.5" y2="386.5" stroke="#000" stroke-width="1" />
<text transform="translate(475.4,389.7) scale(0.93,1)" font-size="16.5" text-anchor="end" stroke="#000" stroke-width="0.6">6,</text>
<line x1="476.5" y1="376.5" x2="480.5" y2="376.5" stroke="#000" stroke-width="1" />
<line x1="476.5" y1="366.5" x2="480.5" y2="366.5" stroke="#000" stroke-width="1" />
<line x1="476.5" y1="355.5" x2="480.5" y2="355.5" stroke="#000" stroke-width="1" />
<line x1="476.5" y1="345.5" x2="485.5" y2="345.5" stroke="#000" stroke-width="1" />
<text transform="translate(475.4,348.7) scale(0.93,1)" font-size="16.5" text-anchor="end" stroke="#000" stroke-width="0.6">8,</text>
<line x1="476.5" y1="335.5" x2="480.5" y2="335.5" stroke="#000" stroke-width="1" />
<line x1="476.5" y1="324.5" x2="480.5" y2="324.5" stroke="#000" stroke-width="1" />
<line x1="476.5" y1="314.5" x2="480.5" y2="314.5" stroke="#000" stroke-width="1" />
<line x1="476.5" y1="303.5" x2="485.5" y2="303.5" stroke="#000" stroke-width="1" />
<text transform="translate(475.4,306.7) scale(0.93,1)" font-size="16.5" text-anchor="end" stroke="#000" stroke-width="0.6">10,</text>
<line x1="476.5" y1="293.5" x2="480.5" y2="293.5" stroke="#000" stroke-width="1" />
<line x1="476.5" y1="283.5" x2="480.5" y2="283.5" stroke="#000" stroke-width="1" />
<line x1="476.5" y1="272.5" x2="480.5" y2="272.5" stroke="#000" stroke-width="1" />
<line x1="476.5" y1="262.5" x2="485.5" y2="262.5" stroke="#000" stroke-width="1" />
<text transform="translate(475.4,265.7) scale(0.93,1)" font-size="16.5" text-anchor="end" stroke="#000" stroke-width="0.6">12,</text>
<line x1="476.5" y1="252.5" x2="480.5" y2="252.5" stroke="#000" stroke-width="1" />
<line x1="476.5" y1="241.5" x2="480.5" y2="241.5" stroke="#000" stroke-width="1" />
<text transform="translate(455,230.5) rotate(-90)" font-size="16.5" text-anchor="end" stroke="#000" stroke-width="0.6" letter-spacing="0.4">Strip count</text>
<polyline fill="none" shape-rendering="crispEdges" stroke="#000" stroke-width="1" points="476.5,490.3 479.5,448.8 482.4,448.8 485.4,448.8 488.4,428.1 491.4,428.1 494.3,448.8 497.3,428.1 500.3,428.1 503.2,407.4 506.2,407.4 509.2,428.1 512.2,407.4 515.1,407.4 518.1,407.4 521.1,407.4 524.0,407.4 527.0,428.1 530.0,407.4 533.0,407.4 535.9,428.1 538.9,428.1 541.9,407.4 544.8,407.4 547.8,428.1 550.8,428.1 553.8,407.4 556.7,407.4 559.7,428.1 562.7,407.4 565.6,407.4 568.6,428.1 571.6,428.1 574.6,428.1 577.5,407.4 580.5,428.1 583.5,386.6 586.5,407.4 589.4,407.4 592.4,428.1 595.4,407.4 598.3,407.4 601.3,428.1 604.3,428.1 607.3,428.1 610.2,428.1 613.2,428.1 616.2,407.4 619.1,428.1 622.1,428.1 625.1,407.4 628.1,428.1 631.0,428.1 634.0,428.1 637.0,448.8 639.9,407.4 642.9,428.1 645.9,428.1 648.9,428.1 651.8,386.6 654.8,428.1 657.8,407.4 660.7,407.4 663.7,428.1 666.7,407.4 669.7,407.4 672.6,448.8 675.6,448.8 678.6,469.6 681.5,490.3 684.5,490.3 687.5,469.6 690.5,490.3 693.4,428.1 696.4,428.1 699.4,448.8 702.3,469.6 705.3,490.3 708.3,511.0 711.3,511.0 714.2,511.0 717.2,511.0 720.2,490.3 723.1,511.0 726.1,490.3 729.1,490.3 732.1,490.3 735.0,511.0 738.0,511.0 741.0,511.0 743.9,511.0 746.9,511.0 749.9,511.0 752.9,511.0" />
<g fill="#000"><circle cx="476.5" cy="490.3" r="4.2"/><circle cx="479.5" cy="448.8" r="4.2"/><circle cx="482.4" cy="448.8" r="4.2"/><circle cx="485.4" cy="448.8" r="4.2"/><circle cx="488.4" cy="428.1" r="4.2"/><circle cx="491.4" cy="428.1" r="4.2"/><circle cx="494.3" cy="448.8" r="4.2"/><circle cx="497.3" cy="428.1" r="4.2"/><circle cx="500.3" cy="428.1" r="4.2"/><circle cx="503.2" cy="407.4" r="4.2"/><circle cx="506.2" cy="407.4" r="4.2"/><circle cx="509.2" cy="428.1" r="4.2"/><circle cx="512.2" cy="407.4" r="4.2"/><circle cx="515.1" cy="407.4" r="4.2"/><circle cx="518.1" cy="407.4" r="4.2"/><circle cx="521.1" cy="407.4" r="4.2"/><circle cx="524.0" cy="407.4" r="4.2"/><circle cx="527.0" cy="428.1" r="4.2"/><circle cx="530.0" cy="407.4" r="4.2"/><circle cx="533.0" cy="407.4" r="4.2"/><circle cx="535.9" cy="428.1" r="4.2"/><circle cx="538.9" cy="428.1" r="4.2"/><circle cx="541.9" cy="407.4" r="4.2"/><circle cx="544.8" cy="407.4" r="4.2"/><circle cx="547.8" cy="428.1" r="4.2"/><circle cx="550.8" cy="428.1" r="4.2"/><circle cx="553.8" cy="407.4" r="4.2"/><circle cx="556.7" cy="407.4" r="4.2"/><circle cx="559.7" cy="428.1" r="4.2"/><circle cx="562.7" cy="407.4" r="4.2"/><circle cx="565.6" cy="407.4" r="4.2"/><circle cx="568.6" cy="428.1" r="4.2"/><circle cx="571.6" cy="428.1" r="4.2"/><circle cx="574.6" cy="428.1" r="4.2"/><circle cx="577.5" cy="407.4" r="4.2"/><circle cx="580.5" cy="428.1" r="4.2"/><circle cx="583.5" cy="386.6" r="4.2"/><circle cx="586.5" cy="407.4" r="4.2"/><circle cx="589.4" cy="407.4" r="4.2"/><circle cx="592.4" cy="428.1" r="4.2"/><circle cx="595.4" cy="407.4" r="4.2"/><circle cx="598.3" cy="407.4" r="4.2"/><circle cx="601.3" cy="428.1" r="4.2"/><circle cx="604.3" cy="428.1" r="4.2"/><circle cx="607.3" cy="428.1" r="4.2"/><circle cx="610.2" cy="428.1" r="4.2"/><circle cx="613.2" cy="428.1" r="4.2"/><circle cx="616.2" cy="407.4" r="4.2"/><circle cx="619.1" cy="428.1" r="4.2"/><circle cx="622.1" cy="428.1" r="4.2"/><circle cx="625.1" cy="407.4" r="4.2"/><circle cx="628.1" cy="428.1" r="4.2"/><circle cx="631.0" cy="428.1" r="4.2"/><circle cx="634.0" cy="428.1" r="4.2"/><circle cx="637.0" cy="448.8" r="4.2"/><circle cx="639.9" cy="407.4" r="4.2"/><circle cx="642.9" cy="428.1" r="4.2"/><circle cx="645.9" cy="428.1" r="4.2"/><circle cx="648.9" cy="428.1" r="4.2"/><circle cx="651.8" cy="386.6" r="4.2"/><circle cx="654.8" cy="428.1" r="4.2"/><circle cx="657.8" cy="407.4" r="4.2"/><circle cx="660.7" cy="407.4" r="4.2"/><circle cx="663.7" cy="428.1" r="4.2"/><circle cx="666.7" cy="407.4" r="4.2"/><circle cx="669.7" cy="407.4" r="4.2"/><circle cx="672.6" cy="448.8" r="4.2"/><circle cx="675.6" cy="448.8" r="4.2"/><circle cx="678.6" cy="469.6" r="4.2"/><circle cx="681.5" cy="490.3" r="4.2"/><circle cx="684.5" cy="490.3" r="4.2"/><circle cx="687.5" cy="469.6" r="4.2"/><circle cx="690.5" cy="490.3" r="4.2"/><circle cx="693.4" cy="428.1" r="4.2"/><circle cx="696.4" cy="428.1" r="4.2"/><circle cx="699.4" cy="448.8" r="4.2"/><circle cx="702.3" cy="469.6" r="4.2"/><circle cx="705.3" cy="490.3" r="4.2"/><circle cx="708.3" cy="511.0" r="4.2"/><circle cx="711.3" cy="511.0" r="4.2"/><circle cx="714.2" cy="511.0" r="4.2"/><circle cx="717.2" cy="511.0" r="4.2"/><circle cx="720.2" cy="490.3" r="4.2"/><circle cx="723.1" cy="511.0" r="4.2"/><circle cx="726.1" cy="490.3" r="4.2"/><circle cx="729.1" cy="490.3" r="4.2"/><circle cx="732.1" cy="490.3" r="4.2"/><circle cx="735.0" cy="511.0" r="4.2"/><circle cx="738.0" cy="511.0" r="4.2"/><circle cx="741.0" cy="511.0" r="4.2"/><circle cx="743.9" cy="511.0" r="4.2"/><circle cx="746.9" cy="511.0" r="4.2"/><circle cx="749.9" cy="511.0" r="4.2"/><circle cx="752.9" cy="511.0" r="4.2"/></g>
<polyline fill="none" shape-rendering="crispEdges" stroke="#ff0000" stroke-width="1" points="476.5,469.6 479.5,469.6 482.4,448.8 485.4,448.8 488.4,448.8 491.4,448.8 494.3,448.8 497.3,448.8 500.3,448.8 503.2,428.1 506.2,428.1 509.2,428.1 512.2,407.4 515.1,407.4 518.1,407.4 521.1,407.4 524.0,428.1 527.0,428.1 530.0,407.4 533.0,407.4 535.9,428.1 538.9,428.1 541.9,428.1 544.8,407.4 547.8,407.4 550.8,428.1 553.8,428.1 556.7,407.4 559.7,407.4 562.7,428.1 565.6,428.1 568.6,428.1 571.6,428.1 574.6,407.4 577.5,407.4 580.5,407.4 583.5,407.4 586.5,386.6 589.4,386.6 592.4,407.4 595.4,407.4 598.3,407.4 601.3,428.1 604.3,428.1 607.3,428.1 610.2,428.1 613.2,407.4 616.2,407.4 619.1,428.1 622.1,428.1 625.1,407.4 628.1,407.4 631.0,428.1 634.0,448.8 637.0,469.6 639.9,448.8 642.9,448.8 645.9,469.6 648.9,469.6 651.8,490.3 654.8,490.3 657.8,469.6 660.7,469.6 663.7,469.6 666.7,469.6 669.7,469.6 672.6,448.8 675.6,469.6 678.6,448.8 681.5,448.8 684.5,448.8 687.5,448.8 690.5,448.8 693.4,469.6 696.4,448.8 699.4,490.3 702.3,469.6 705.3,490.3 708.3,490.3 711.3,469.6 714.2,511.0 717.2,511.0 720.2,511.0 723.1,511.0 726.1,511.0 729.1,511.0 732.1,511.0 735.0,511.0 738.0,511.0 741.0,511.0 743.9,511.0 746.9,511.0 749.9,511.0 752.9,511.0" stroke-dasharray="3 3"/>
<polyline fill="none" shape-rendering="crispEdges" stroke="#0000ff" stroke-width="1" points="476.5,448.8 479.5,407.4 482.4,386.6 485.4,386.6 488.4,365.9 491.4,365.9 494.3,386.6 497.3,365.9 500.3,365.9 503.2,324.4 506.2,324.4 509.2,345.2 512.2,303.7 515.1,303.7 518.1,303.7 521.1,303.7 524.0,324.4 527.0,345.2 530.0,303.7 533.0,303.7 535.9,345.2 538.9,345.2 541.9,324.4 544.8,303.7 547.8,324.4 550.8,345.2 553.8,324.4 556.7,303.7 559.7,324.4 562.7,324.4 565.6,324.4 568.6,345.2 571.6,345.2 574.6,324.4 577.5,303.7 580.5,324.4 583.5,283.0 586.5,283.0 589.4,283.0 592.4,324.4 595.4,303.7 598.3,303.7 601.3,345.2 604.3,345.2 607.3,345.2 610.2,345.2 613.2,324.4 616.2,303.7 619.1,345.2 622.1,345.2 625.1,303.7 628.1,324.4 631.0,345.2 634.0,365.9 637.0,407.4 639.9,345.2 642.9,365.9 645.9,386.6 648.9,386.6 651.8,365.9 654.8,407.4 657.8,365.9 660.7,365.9 663.7,386.6 666.7,365.9 669.7,365.9 672.6,386.6 675.6,407.4 678.6,407.4 681.5,428.1 684.5,428.1 687.5,407.4 690.5,428.1 693.4,386.6 696.4,365.9 699.4,428.1 702.3,428.1 705.3,469.6 708.3,490.3 711.3,469.6 714.2,511.0 717.2,511.0 720.2,490.3 723.1,511.0 726.1,490.3 729.1,490.3 732.1,490.3 735.0,511.0 738.0,511.0 741.0,511.0 743.9,511.0 746.9,511.0 749.9,511.0 752.9,511.0" stroke-dasharray="20 5"/>
<text x="452" y="217" font-size="11" text-anchor="start" font-weight="700" letter-spacing="0.24" stroke="#000" stroke-width="0.2" >Strip count versus time: X (black), Y (red) and total(blue)</text>
<rect x="881.5" y="241.5" width="304" height="311" fill="#fff" stroke="#000" stroke-width="1"/>
<line x1="881.5" y1="552.5" x2="881.5" y2="543.5" stroke="#000" stroke-width="1" />
<text transform="translate(881.5,566) scale(0.93,1)" font-size="16.5" text-anchor="middle" stroke="#000" stroke-width="0.6">0,</text>
<line x1="894.5" y1="552.5" x2="894.5" y2="548.5" stroke="#000" stroke-width="1" />
<line x1="908.5" y1="552.5" x2="908.5" y2="548.5" stroke="#000" stroke-width="1" />
<line x1="922.5" y1="552.5" x2="922.5" y2="548.5" stroke="#000" stroke-width="1" />
<line x1="936.5" y1="552.5" x2="936.5" y2="543.5" stroke="#000" stroke-width="1" />
<text transform="translate(936.5,566) scale(0.93,1)" font-size="16.5" text-anchor="middle" stroke="#000" stroke-width="0.6">20,</text>
<line x1="949.5" y1="552.5" x2="949.5" y2="548.5" stroke="#000" stroke-width="1" />
<line x1="963.5" y1="552.5" x2="963.5" y2="548.5" stroke="#000" stroke-width="1" />
<line x1="977.5" y1="552.5" x2="977.5" y2="548.5" stroke="#000" stroke-width="1" />
<line x1="990.5" y1="552.5" x2="990.5" y2="543.5" stroke="#000" stroke-width="1" />
<text transform="translate(990.5,566) scale(0.93,1)" font-size="16.5" text-anchor="middle" stroke="#000" stroke-width="0.6">40,</text>
<line x1="1004.5" y1="552.5" x2="1004.5" y2="548.5" stroke="#000" stroke-width="1" />
<line x1="1018.5" y1="552.5" x2="1018.5" y2="548.5" stroke="#000" stroke-width="1" />
<line x1="1031.5" y1="552.5" x2="1031.5" y2="548.5" stroke="#000" stroke-width="1" />
<line x1="1045.5" y1="552.5" x2="1045.5" y2="543.5" stroke="#000" stroke-width="1" />
<text transform="translate(1045.5,566) scale(0.93,1)" font-size="16.5" text-anchor="middle" stroke="#000" stroke-width="0.6">60,</text>
<line x1="1059.5" y1="552.5" x2="1059.5" y2="548.5" stroke="#000" stroke-width="1" />
<line x1="1072.5" y1="552.5" x2="1072.5" y2="548.5" stroke="#000" stroke-width="1" />
<line x1="1086.5" y1="552.5" x2="1086.5" y2="548.5" stroke="#000" stroke-width="1" />
<line x1="1100.5" y1="552.5" x2="1100.5" y2="543.5" stroke="#000" stroke-width="1" />
<text transform="translate(1100.5,566) scale(0.93,1)" font-size="16.5" text-anchor="middle" stroke="#000" stroke-width="0.6">80,</text>
<line x1="1113.5" y1="552.5" x2="1113.5" y2="548.5" stroke="#000" stroke-width="1" />
<line x1="1127.5" y1="552.5" x2="1127.5" y2="548.5" stroke="#000" stroke-width="1" />
<line x1="1141.5" y1="552.5" x2="1141.5" y2="548.5" stroke="#000" stroke-width="1" />
<line x1="1154.5" y1="552.5" x2="1154.5" y2="543.5" stroke="#000" stroke-width="1" />
<text transform="translate(1154.5,566) scale(0.93,1)" font-size="16.5" text-anchor="middle" stroke="#000" stroke-width="0.6">100,</text>
<line x1="1168.5" y1="552.5" x2="1168.5" y2="548.5" stroke="#000" stroke-width="1" />
<line x1="1182.5" y1="552.5" x2="1182.5" y2="548.5" stroke="#000" stroke-width="1" />
<text x="1184" y="582" font-size="16.5" text-anchor="end" stroke="#000" stroke-width="0.45">n</text>
<line x1="881.5" y1="552.5" x2="885.5" y2="552.5" stroke="#000" stroke-width="1" />
<line x1="881.5" y1="545.5" x2="885.5" y2="545.5" stroke="#000" stroke-width="1" />
<line x1="881.5" y1="538.5" x2="885.5" y2="538.5" stroke="#000" stroke-width="1" />
<line x1="881.5" y1="531.5" x2="890.5" y2="531.5" stroke="#000" stroke-width="1" />
<text transform="translate(882.2,534.7) scale(0.93,1)" font-size="16.5" text-anchor="end" stroke="#000" stroke-width="0.6"><tspan letter-spacing="-1.2">-</tspan>200,</text>
<line x1="881.5" y1="524.5" x2="885.5" y2="524.5" stroke="#000" stroke-width="1" />
<line x1="881.5" y1="518.5" x2="885.5" y2="518.5" stroke="#000" stroke-width="1" />
<line x1="881.5" y1="511.5" x2="885.5" y2="511.5" stroke="#000" stroke-width="1" />
<line x1="881.5" y1="504.5" x2="885.5" y2="504.5" stroke="#000" stroke-width="1" />
<line x1="881.5" y1="497.5" x2="890.5" y2="497.5" stroke="#000" stroke-width="1" />
<text transform="translate(882.2,500.7) scale(0.93,1)" font-size="16.5" text-anchor="end" stroke="#000" stroke-width="0.6"><tspan letter-spacing="-1.2">-</tspan>150,</text>
<line x1="881.5" y1="490.5" x2="885.5" y2="490.5" stroke="#000" stroke-width="1" />
<line x1="881.5" y1="484.5" x2="885.5" y2="484.5" stroke="#000" stroke-width="1" />
<line x1="881.5" y1="477.5" x2="885.5" y2="477.5" stroke="#000" stroke-width="1" />
<line x1="881.5" y1="470.5" x2="885.5" y2="470.5" stroke="#000" stroke-width="1" />
<line x1="881.5" y1="463.5" x2="890.5" y2="463.5" stroke="#000" stroke-width="1" />
<text transform="translate(882.2,466.7) scale(0.93,1)" font-size="16.5" text-anchor="end" stroke="#000" stroke-width="0.6"><tspan letter-spacing="-1.2">-</tspan>100,</text>
<line x1="881.5" y1="456.5" x2="885.5" y2="456.5" stroke="#000" stroke-width="1" />
<line x1="881.5" y1="450.5" x2="885.5" y2="450.5" stroke="#000" stroke-width="1" />
<line x1="881.5" y1="443.5" x2="885.5" y2="443.5" stroke="#000" stroke-width="1" />
<line x1="881.5" y1="436.5" x2="885.5" y2="436.5" stroke="#000" stroke-width="1" />
<line x1="881.5" y1="429.5" x2="890.5" y2="429.5" stroke="#000" stroke-width="1" />
<text transform="translate(882.2,432.7) scale(0.93,1)" font-size="16.5" text-anchor="end" stroke="#000" stroke-width="0.6"><tspan letter-spacing="-1.2">-</tspan>50,</text>
<line x1="881.5" y1="423.5" x2="885.5" y2="423.5" stroke="#000" stroke-width="1" />
<line x1="881.5" y1="416.5" x2="885.5" y2="416.5" stroke="#000" stroke-width="1" />
<line x1="881.5" y1="409.5" x2="885.5" y2="409.5" stroke="#000" stroke-width="1" />
<line x1="881.5" y1="402.5" x2="885.5" y2="402.5" stroke="#000" stroke-width="1" />
<line x1="881.5" y1="395.5" x2="890.5" y2="395.5" stroke="#000" stroke-width="1" />
<text transform="translate(882.2,398.7) scale(0.93,1)" font-size="16.5" text-anchor="end" stroke="#000" stroke-width="0.6">0,</text>
<line x1="881.5" y1="389.5" x2="885.5" y2="389.5" stroke="#000" stroke-width="1" />
<line x1="881.5" y1="382.5" x2="885.5" y2="382.5" stroke="#000" stroke-width="1" />
<line x1="881.5" y1="375.5" x2="885.5" y2="375.5" stroke="#000" stroke-width="1" />
<line x1="881.5" y1="368.5" x2="885.5" y2="368.5" stroke="#000" stroke-width="1" />
<line x1="881.5" y1="361.5" x2="890.5" y2="361.5" stroke="#000" stroke-width="1" />
<text transform="translate(882.2,364.7) scale(0.93,1)" font-size="16.5" text-anchor="end" stroke="#000" stroke-width="0.6">50,</text>
<line x1="881.5" y1="355.5" x2="885.5" y2="355.5" stroke="#000" stroke-width="1" />
<line x1="881.5" y1="348.5" x2="885.5" y2="348.5" stroke="#000" stroke-width="1" />
<line x1="881.5" y1="341.5" x2="885.5" y2="341.5" stroke="#000" stroke-width="1" />
<line x1="881.5" y1="334.5" x2="885.5" y2="334.5" stroke="#000" stroke-width="1" />
<line x1="881.5" y1="327.5" x2="890.5" y2="327.5" stroke="#000" stroke-width="1" />
<text transform="translate(882.2,330.7) scale(0.93,1)" font-size="16.5" text-anchor="end" stroke="#000" stroke-width="0.6">100,</text>
<line x1="881.5" y1="321.5" x2="885.5" y2="321.5" stroke="#000" stroke-width="1" />
<line x1="881.5" y1="314.5" x2="885.5" y2="314.5" stroke="#000" stroke-width="1" />
<line x1="881.5" y1="307.5" x2="885.5" y2="307.5" stroke="#000" stroke-width="1" />
<line x1="881.5" y1="300.5" x2="885.5" y2="300.5" stroke="#000" stroke-width="1" />
<line x1="881.5" y1="293.5" x2="890.5" y2="293.5" stroke="#000" stroke-width="1" />
<text transform="translate(882.2,296.7) scale(0.93,1)" font-size="16.5" text-anchor="end" stroke="#000" stroke-width="0.6">150,</text>
<line x1="881.5" y1="287.5" x2="885.5" y2="287.5" stroke="#000" stroke-width="1" />
<line x1="881.5" y1="280.5" x2="885.5" y2="280.5" stroke="#000" stroke-width="1" />
<line x1="881.5" y1="273.5" x2="885.5" y2="273.5" stroke="#000" stroke-width="1" />
<line x1="881.5" y1="266.5" x2="885.5" y2="266.5" stroke="#000" stroke-width="1" />
<line x1="881.5" y1="259.5" x2="890.5" y2="259.5" stroke="#000" stroke-width="1" />
<text transform="translate(882.2,262.7) scale(0.93,1)" font-size="16.5" text-anchor="end" stroke="#000" stroke-width="0.6">200,</text>
<line x1="881.5" y1="253.5" x2="885.5" y2="253.5" stroke="#000" stroke-width="1" />
<line x1="881.5" y1="246.5" x2="885.5" y2="246.5" stroke="#000" stroke-width="1" />
<text transform="translate(859,237) rotate(-90)" font-size="16.5" text-anchor="end" stroke="#000" stroke-width="0.6" letter-spacing="0">ampl</text>
<polyline fill="none" shape-rendering="crispEdges" stroke="#000" stroke-width="1" points="881.5,523.3 884.2,523.7 887.0,524.2 889.7,524.7 892.4,525.2 895.2,525.7 897.9,526.1 900.7,526.3 903.4,526.1 906.1,525.5 908.9,524.6 911.6,523.2 914.3,521.2 917.1,518.5 919.8,515.3 922.5,511.4 925.3,507.1 928.0,502.5 930.8,497.5 933.5,492.1 936.2,486.3 939.0,480.1 941.7,473.7 944.4,467.2 947.2,460.6 949.9,453.9 952.6,447.1 955.4,440.3 958.1,433.6 960.9,427.0 963.6,420.5 966.3,414.0 969.1,407.7 971.8,401.6 974.5,395.8 977.3,390.1 980.0,384.7 982.7,379.4 985.5,374.0 988.2,368.6 991.0,363.2 993.7,358.2 996.4,353.4 999.2,348.7 1001.9,344.0 1004.6,339.5 1007.4,335.5 1010.1,331.7 1012.8,327.9 1015.6,324.3 1018.3,320.8 1021.0,317.7 1023.8,314.9 1026.5,312.1 1029.3,309.4 1032.0,306.8 1034.7,304.4 1037.5,302.2 1040.2,300.0 1042.9,297.9 1045.7,295.8 1048.4,294.0 1051.1,292.3 1053.9,290.6 1056.6,288.9 1059.4,287.3 1062.1,285.9 1064.8,284.6 1067.6,283.3 1070.3,282.0 1073.0,280.8 1075.8,279.7 1078.5,278.7 1081.2,277.6 1084.0,276.6 1086.7,275.7 1089.5,274.9 1092.2,274.2 1094.9,273.4 1097.7,272.7 1100.4,272.1 1103.1,271.5 1105.9,271.0 1108.6,270.5 1111.3,270.0 1114.1,269.6 1116.8,269.3 1119.6,269.0 1122.3,268.8 1125.0,268.6 1127.8,268.4 1130.5,268.2 1133.2,268.1 1136.0,267.9 1138.7,267.8 1141.4,267.7 1144.2,267.6 1146.9,267.6 1149.7,267.6 1152.4,267.5 1155.1,267.5 1157.9,267.5" />
<g fill="#000"><circle cx="881.5" cy="523.3" r="4.2"/><circle cx="884.2" cy="523.7" r="4.2"/><circle cx="887.0" cy="524.2" r="4.2"/><circle cx="889.7" cy="524.7" r="4.2"/><circle cx="892.4" cy="525.2" r="4.2"/><circle cx="895.2" cy="525.7" r="4.2"/><circle cx="897.9" cy="526.1" r="4.2"/><circle cx="900.7" cy="526.3" r="4.2"/><circle cx="903.4" cy="526.1" r="4.2"/><circle cx="906.1" cy="525.5" r="4.2"/><circle cx="908.9" cy="524.6" r="4.2"/><circle cx="911.6" cy="523.2" r="4.2"/><circle cx="914.3" cy="521.2" r="4.2"/><circle cx="917.1" cy="518.5" r="4.2"/><circle cx="919.8" cy="515.3" r="4.2"/><circle cx="922.5" cy="511.4" r="4.2"/><circle cx="925.3" cy="507.1" r="4.2"/><circle cx="928.0" cy="502.5" r="4.2"/><circle cx="930.8" cy="497.5" r="4.2"/><circle cx="933.5" cy="492.1" r="4.2"/><circle cx="936.2" cy="486.3" r="4.2"/><circle cx="939.0" cy="480.1" r="4.2"/><circle cx="941.7" cy="473.7" r="4.2"/><circle cx="944.4" cy="467.2" r="4.2"/><circle cx="947.2" cy="460.6" r="4.2"/><circle cx="949.9" cy="453.9" r="4.2"/><circle cx="952.6" cy="447.1" r="4.2"/><circle cx="955.4" cy="440.3" r="4.2"/><circle cx="958.1" cy="433.6" r="4.2"/><circle cx="960.9" cy="427.0" r="4.2"/><circle cx="963.6" cy="420.5" r="4.2"/><circle cx="966.3" cy="414.0" r="4.2"/><circle cx="969.1" cy="407.7" r="4.2"/><circle cx="971.8" cy="401.6" r="4.2"/><circle cx="974.5" cy="395.8" r="4.2"/><circle cx="977.3" cy="390.1" r="4.2"/><circle cx="980.0" cy="384.7" r="4.2"/><circle cx="982.7" cy="379.4" r="4.2"/><circle cx="985.5" cy="374.0" r="4.2"/><circle cx="988.2" cy="368.6" r="4.2"/><circle cx="991.0" cy="363.2" r="4.2"/><circle cx="993.7" cy="358.2" r="4.2"/><circle cx="996.4" cy="353.4" r="4.2"/><circle cx="999.2" cy="348.7" r="4.2"/><circle cx="1001.9" cy="344.0" r="4.2"/><circle cx="1004.6" cy="339.5" r="4.2"/><circle cx="1007.4" cy="335.5" r="4.2"/><circle cx="1010.1" cy="331.7" r="4.2"/><circle cx="1012.8" cy="327.9" r="4.2"/><circle cx="1015.6" cy="324.3" r="4.2"/><circle cx="1018.3" cy="320.8" r="4.2"/><circle cx="1021.0" cy="317.7" r="4.2"/><circle cx="1023.8" cy="314.9" r="4.2"/><circle cx="1026.5" cy="312.1" r="4.2"/><circle cx="1029.3" cy="309.4" r="4.2"/><circle cx="1032.0" cy="306.8" r="4.2"/><circle cx="1034.7" cy="304.4" r="4.2"/><circle cx="1037.5" cy="302.2" r="4.2"/><circle cx="1040.2" cy="300.0" r="4.2"/><circle cx="1042.9" cy="297.9" r="4.2"/><circle cx="1045.7" cy="295.8" r="4.2"/><circle cx="1048.4" cy="294.0" r="4.2"/><circle cx="1051.1" cy="292.3" r="4.2"/><circle cx="1053.9" cy="290.6" r="4.2"/><circle cx="1056.6" cy="288.9" r="4.2"/><circle cx="1059.4" cy="287.3" r="4.2"/><circle cx="1062.1" cy="285.9" r="4.2"/><circle cx="1064.8" cy="284.6" r="4.2"/><circle cx="1067.6" cy="283.3" r="4.2"/><circle cx="1070.3" cy="282.0" r="4.2"/><circle cx="1073.0" cy="280.8" r="4.2"/><circle cx="1075.8" cy="279.7" r="4.2"/><circle cx="1078.5" cy="278.7" r="4.2"/><circle cx="1081.2" cy="277.6" r="4.2"/><circle cx="1084.0" cy="276.6" r="4.2"/><circle cx="1086.7" cy="275.7" r="4.2"/><circle cx="1089.5" cy="274.9" r="4.2"/><circle cx="1092.2" cy="274.2" r="4.2"/><circle cx="1094.9" cy="273.4" r="4.2"/><circle cx="1097.7" cy="272.7" r="4.2"/><circle cx="1100.4" cy="272.1" r="4.2"/><circle cx="1103.1" cy="271.5" r="4.2"/><circle cx="1105.9" cy="271.0" r="4.2"/><circle cx="1108.6" cy="270.5" r="4.2"/><circle cx="1111.3" cy="270.0" r="4.2"/><circle cx="1114.1" cy="269.6" r="4.2"/><circle cx="1116.8" cy="269.3" r="4.2"/><circle cx="1119.6" cy="269.0" r="4.2"/><circle cx="1122.3" cy="268.8" r="4.2"/><circle cx="1125.0" cy="268.6" r="4.2"/><circle cx="1127.8" cy="268.4" r="4.2"/><circle cx="1130.5" cy="268.2" r="4.2"/><circle cx="1133.2" cy="268.1" r="4.2"/><circle cx="1136.0" cy="267.9" r="4.2"/><circle cx="1138.7" cy="267.8" r="4.2"/><circle cx="1141.4" cy="267.7" r="4.2"/><circle cx="1144.2" cy="267.6" r="4.2"/><circle cx="1146.9" cy="267.6" r="4.2"/><circle cx="1149.7" cy="267.6" r="4.2"/><circle cx="1152.4" cy="267.5" r="4.2"/><circle cx="1155.1" cy="267.5" r="4.2"/><circle cx="1157.9" cy="267.5" r="4.2"/></g>
<text x="856" y="218.9" font-size="15.8" letter-spacing="0.65" stroke="#000" stroke-width="0.55">Raw event</text>
<rect x="71.5" y="646.5" width="304" height="311" fill="#fff" stroke="#000" stroke-width="1"/>
<g shape-rendering="crispEdges">
<rect x="102" y="953" width="21" height="5" fill="#00ebff" />
<rect x="91" y="950" width="32" height="4" fill="#00ebff" />
<rect x="91" y="946" width="32" height="5" fill="#00ff55" />
<rect x="91" y="942" width="32" height="5" fill="#00ff55" />
<rect x="91" y="938" width="42" height="5" fill="#00ff55" />
<rect x="91" y="934" width="42" height="5" fill="#00ff55" />
<rect x="102" y="930" width="31" height="5" fill="#00ff55" />
<rect x="102" y="926" width="41" height="5" fill="#00ff55" />
<rect x="102" y="922" width="41" height="5" fill="#00ff55" />
<rect x="102" y="918" width="51" height="5" fill="#81ff00" />
<rect x="102" y="914" width="51" height="5" fill="#81ff00" />
<rect x="112" y="910" width="41" height="5" fill="#81ff00" />
<rect x="112" y="906" width="51" height="5" fill="#ffbe00" />
<rect x="112" y="902" width="51" height="5" fill="#ffbe00" />
<rect x="112" y="898" width="51" height="5" fill="#ffbe00" />
<rect x="122" y="894" width="51" height="5" fill="#ffbe00" />
<rect x="122" y="890" width="51" height="5" fill="#81ff00" />
<rect x="132" y="887" width="41" height="4" fill="#81ff00" />
<rect x="132" y="883" width="52" height="5" fill="#ffbe00" />
<rect x="132" y="879" width="52" height="5" fill="#ffbe00" />
<rect x="142" y="875" width="42" height="5" fill="#81ff00" />
<rect x="142" y="871" width="42" height="5" fill="#81ff00" />
<rect x="142" y="867" width="52" height="5" fill="#81ff00" />
<rect x="142" y="863" width="52" height="5" fill="#ffbe00" />
<rect x="152" y="859" width="42" height="5" fill="#ffbe00" />
<rect x="152" y="855" width="42" height="5" fill="#81ff00" />
<rect x="152" y="851" width="52" height="5" fill="#81ff00" />
<rect x="152" y="847" width="52" height="5" fill="#ffbe00" />
<rect x="162" y="843" width="42" height="5" fill="#ffbe00" />
<rect x="162" y="839" width="52" height="5" fill="#81ff00" />
<rect x="162" y="835" width="52" height="5" fill="#81ff00" />
<rect x="172" y="831" width="42" height="5" fill="#81ff00" />
<rect x="172" y="827" width="42" height="5" fill="#81ff00" />
<rect x="172" y="824" width="42" height="4" fill="#ffbe00" />
<rect x="172" y="820" width="52" height="5" fill="#ffbe00" />
<rect x="183" y="816" width="41" height="5" fill="#ffbe00" />
<rect x="172" y="812" width="62" height="5" fill="#ffbe00" />
<rect x="183" y="808" width="51" height="5" fill="#ff0000" />
<rect x="183" y="804" width="51" height="5" fill="#ff0000" />
<rect x="193" y="800" width="41" height="5" fill="#ffbe00" />
<rect x="193" y="796" width="51" height="5" fill="#ffbe00" />
<rect x="193" y="792" width="51" height="5" fill="#ffbe00" />
<rect x="203" y="788" width="41" height="5" fill="#81ff00" />
<rect x="203" y="784" width="41" height="5" fill="#81ff00" />
<rect x="203" y="780" width="41" height="5" fill="#81ff00" />
<rect x="213" y="776" width="41" height="5" fill="#81ff00" />
<rect x="213" y="772" width="41" height="5" fill="#ffbe00" />
<rect x="213" y="768" width="52" height="5" fill="#ffbe00" />
<rect x="223" y="765" width="42" height="4" fill="#81ff00" />
<rect x="223" y="761" width="42" height="5" fill="#81ff00" />
<rect x="223" y="757" width="52" height="5" fill="#ffbe00" />
<rect x="233" y="753" width="42" height="5" fill="#ffbe00" />
<rect x="233" y="749" width="42" height="5" fill="#81ff00" />
<rect x="233" y="745" width="42" height="5" fill="#00ff55" />
<rect x="243" y="741" width="32" height="5" fill="#00ebff" />
<rect x="243" y="737" width="52" height="5" fill="#00ff55" />
<rect x="253" y="733" width="42" height="5" fill="#00ff55" />
<rect x="253" y="729" width="42" height="5" fill="#00ebff" />
<rect x="264" y="725" width="41" height="5" fill="#00ebff" />
<rect x="253" y="721" width="62" height="5" fill="#002cff" />
<rect x="264" y="717" width="41" height="5" fill="#002cff" />
<rect x="264" y="713" width="51" height="5" fill="#00ebff" />
<rect x="264" y="709" width="51" height="5" fill="#00ebff" />
<rect x="274" y="705" width="41" height="5" fill="#00ebff" />
<rect x="274" y="702" width="51" height="4" fill="#00ebff" />
<rect x="274" y="698" width="51" height="5" fill="#00ebff" />
<rect x="294" y="694" width="31" height="5" fill="#00ff55" />
<rect x="294" y="690" width="31" height="5" fill="#00ebff" />
<rect x="304" y="686" width="21" height="5" fill="#00ff55" />
<rect x="314" y="682" width="11" height="5" fill="#00ff55" />
<rect x="314" y="678" width="11" height="5" fill="#00ff55" />
<rect x="304" y="674" width="21" height="5" fill="#00ff55" />
<rect x="314" y="670" width="11" height="5" fill="#00ff55" />
<rect x="314" y="666" width="42" height="5" fill="#00ebff" />
<rect x="314" y="662" width="42" height="5" fill="#00ff55" />
<rect x="324" y="658" width="32" height="5" fill="#002cff" />
<rect x="335" y="654" width="21" height="5" fill="#00ebff" />
</g>
<rect x="71.5" y="646.5" width="304" height="311" fill="none" stroke="#000" stroke-width="1"/>
<line x1="71.5" y1="957.5" x2="71.5" y2="948.5" stroke="#000" stroke-width="1" />
<text transform="translate(71.5,971) scale(0.93,1)" font-size="16.5" text-anchor="middle" stroke="#000" stroke-width="0.6">30,</text>
<line x1="81.5" y1="957.5" x2="81.5" y2="953.5" stroke="#000" stroke-width="1" />
<line x1="91.5" y1="957.5" x2="91.5" y2="953.5" stroke="#000" stroke-width="1" />
<line x1="101.5" y1="957.5" x2="101.5" y2="953.5" stroke="#000" stroke-width="1" />
<line x1="111.5" y1="957.5" x2="111.5" y2="953.5" stroke="#000" stroke-width="1" />
<line x1="121.5" y1="957.5" x2="121.5" y2="948.5" stroke="#000" stroke-width="1" />
<text transform="translate(121.5,971) scale(0.93,1)" font-size="16.5" text-anchor="middle" stroke="#000" stroke-width="0.6">35,</text>
<line x1="132.5" y1="957.5" x2="132.5" y2="953.5" stroke="#000" stroke-width="1" />
<line x1="142.5" y1="957.5" x2="142.5" y2="953.5" stroke="#000" stroke-width="1" />
<line x1="152.5" y1="957.5" x2="152.5" y2="953.5" stroke="#000" stroke-width="1" />
<line x1="162.5" y1="957.5" x2="162.5" y2="953.5" stroke="#000" stroke-width="1" />
<line x1="172.5" y1="957.5" x2="172.5" y2="948.5" stroke="#000" stroke-width="1" />
<text transform="translate(172.5,971) scale(0.93,1)" font-size="16.5" text-anchor="middle" stroke="#000" stroke-width="0.6">40,</text>
<line x1="182.5" y1="957.5" x2="182.5" y2="953.5" stroke="#000" stroke-width="1" />
<line x1="192.5" y1="957.5" x2="192.5" y2="953.5" stroke="#000" stroke-width="1" />
<line x1="203.5" y1="957.5" x2="203.5" y2="953.5" stroke="#000" stroke-width="1" />
<line x1="213.5" y1="957.5" x2="213.5" y2="953.5" stroke="#000" stroke-width="1" />
<line x1="223.5" y1="957.5" x2="223.5" y2="948.5" stroke="#000" stroke-width="1" />
<text transform="translate(223.5,971) scale(0.93,1)" font-size="16.5" text-anchor="middle" stroke="#000" stroke-width="0.6">45,</text>
<line x1="233.5" y1="957.5" x2="233.5" y2="953.5" stroke="#000" stroke-width="1" />
<line x1="243.5" y1="957.5" x2="243.5" y2="953.5" stroke="#000" stroke-width="1" />
<line x1="253.5" y1="957.5" x2="253.5" y2="953.5" stroke="#000" stroke-width="1" />
<line x1="263.5" y1="957.5" x2="263.5" y2="953.5" stroke="#000" stroke-width="1" />
<line x1="273.5" y1="957.5" x2="273.5" y2="948.5" stroke="#000" stroke-width="1" />
<text transform="translate(273.5,971) scale(0.93,1)" font-size="16.5" text-anchor="middle" stroke="#000" stroke-width="0.6">50,</text>
<line x1="284.5" y1="957.5" x2="284.5" y2="953.5" stroke="#000" stroke-width="1" />
<line x1="294.5" y1="957.5" x2="294.5" y2="953.5" stroke="#000" stroke-width="1" />
<line x1="304.5" y1="957.5" x2="304.5" y2="953.5" stroke="#000" stroke-width="1" />
<line x1="314.5" y1="957.5" x2="314.5" y2="953.5" stroke="#000" stroke-width="1" />
<line x1="324.5" y1="957.5" x2="324.5" y2="948.5" stroke="#000" stroke-width="1" />
<text transform="translate(324.5,971) scale(0.93,1)" font-size="16.5" text-anchor="middle" stroke="#000" stroke-width="0.6">55,</text>
<line x1="334.5" y1="957.5" x2="334.5" y2="953.5" stroke="#000" stroke-width="1" />
<line x1="344.5" y1="957.5" x2="344.5" y2="953.5" stroke="#000" stroke-width="1" />
<line x1="355.5" y1="957.5" x2="355.5" y2="953.5" stroke="#000" stroke-width="1" />
<line x1="365.5" y1="957.5" x2="365.5" y2="953.5" stroke="#000" stroke-width="1" />
<line x1="375.5" y1="957.5" x2="375.5" y2="948.5" stroke="#000" stroke-width="1" />
<text transform="translate(375.5,971) scale(0.93,1)" font-size="16.5" text-anchor="middle" stroke="#000" stroke-width="0.6">60,</text>
<text x="374" y="987" font-size="16.5" text-anchor="end" stroke="#000" stroke-width="0.45">X</text>
<line x1="71.5" y1="957.5" x2="80.5" y2="957.5" stroke="#000" stroke-width="1" />
<text transform="translate(71.2,960.7) scale(0.93,1)" font-size="16.5" text-anchor="end" stroke="#000" stroke-width="0.6">0,</text>
<line x1="71.5" y1="949.5" x2="75.5" y2="949.5" stroke="#000" stroke-width="1" />
<line x1="71.5" y1="942.5" x2="75.5" y2="942.5" stroke="#000" stroke-width="1" />
<line x1="71.5" y1="934.5" x2="75.5" y2="934.5" stroke="#000" stroke-width="1" />
<line x1="71.5" y1="926.5" x2="75.5" y2="926.5" stroke="#000" stroke-width="1" />
<line x1="71.5" y1="918.5" x2="80.5" y2="918.5" stroke="#000" stroke-width="1" />
<text transform="translate(71.2,921.7) scale(0.93,1)" font-size="16.5" text-anchor="end" stroke="#000" stroke-width="0.6">10,</text>
<line x1="71.5" y1="910.5" x2="75.5" y2="910.5" stroke="#000" stroke-width="1" />
<line x1="71.5" y1="902.5" x2="75.5" y2="902.5" stroke="#000" stroke-width="1" />
<line x1="71.5" y1="894.5" x2="75.5" y2="894.5" stroke="#000" stroke-width="1" />
<line x1="71.5" y1="886.5" x2="75.5" y2="886.5" stroke="#000" stroke-width="1" />
<line x1="71.5" y1="879.5" x2="80.5" y2="879.5" stroke="#000" stroke-width="1" />
<text transform="translate(71.2,882.7) scale(0.93,1)" font-size="16.5" text-anchor="end" stroke="#000" stroke-width="0.6">20,</text>
<line x1="71.5" y1="871.5" x2="75.5" y2="871.5" stroke="#000" stroke-width="1" />
<line x1="71.5" y1="863.5" x2="75.5" y2="863.5" stroke="#000" stroke-width="1" />
<line x1="71.5" y1="855.5" x2="75.5" y2="855.5" stroke="#000" stroke-width="1" />
<line x1="71.5" y1="847.5" x2="75.5" y2="847.5" stroke="#000" stroke-width="1" />
<line x1="71.5" y1="839.5" x2="80.5" y2="839.5" stroke="#000" stroke-width="1" />
<text transform="translate(71.2,842.7) scale(0.93,1)" font-size="16.5" text-anchor="end" stroke="#000" stroke-width="0.6">30,</text>
<line x1="71.5" y1="831.5" x2="75.5" y2="831.5" stroke="#000" stroke-width="1" />
<line x1="71.5" y1="823.5" x2="75.5" y2="823.5" stroke="#000" stroke-width="1" />
<line x1="71.5" y1="816.5" x2="75.5" y2="816.5" stroke="#000" stroke-width="1" />
<line x1="71.5" y1="808.5" x2="75.5" y2="808.5" stroke="#000" stroke-width="1" />
<line x1="71.5" y1="800.5" x2="80.5" y2="800.5" stroke="#000" stroke-width="1" />
<text transform="translate(71.2,803.7) scale(0.93,1)" font-size="16.5" text-anchor="end" stroke="#000" stroke-width="0.6">40,</text>
<line x1="71.5" y1="792.5" x2="75.5" y2="792.5" stroke="#000" stroke-width="1" />
<line x1="71.5" y1="784.5" x2="75.5" y2="784.5" stroke="#000" stroke-width="1" />
<line x1="71.5" y1="776.5" x2="75.5" y2="776.5" stroke="#000" stroke-width="1" />
<line x1="71.5" y1="768.5" x2="75.5" y2="768.5" stroke="#000" stroke-width="1" />
<line x1="71.5" y1="760.5" x2="80.5" y2="760.5" stroke="#000" stroke-width="1" />
<text transform="translate(71.2,763.7) scale(0.93,1)" font-size="16.5" text-anchor="end" stroke="#000" stroke-width="0.6">50,</text>
<line x1="71.5" y1="753.5" x2="75.5" y2="753.5" stroke="#000" stroke-width="1" />
<line x1="71.5" y1="745.5" x2="75.5" y2="745.5" stroke="#000" stroke-width="1" />
<line x1="71.5" y1="737.5" x2="75.5" y2="737.5" stroke="#000" stroke-width="1" />
<line x1="71.5" y1="729.5" x2="75.5" y2="729.5" stroke="#000" stroke-width="1" />
<line x1="71.5" y1="721.5" x2="80.5" y2="721.5" stroke="#000" stroke-width="1" />
<text transform="translate(71.2,724.7) scale(0.93,1)" font-size="16.5" text-anchor="end" stroke="#000" stroke-width="0.6">60,</text>
<line x1="71.5" y1="713.5" x2="75.5" y2="713.5" stroke="#000" stroke-width="1" />
<line x1="71.5" y1="705.5" x2="75.5" y2="705.5" stroke="#000" stroke-width="1" />
<line x1="71.5" y1="697.5" x2="75.5" y2="697.5" stroke="#000" stroke-width="1" />
<line x1="71.5" y1="690.5" x2="75.5" y2="690.5" stroke="#000" stroke-width="1" />
<line x1="71.5" y1="682.5" x2="80.5" y2="682.5" stroke="#000" stroke-width="1" />
<text transform="translate(71.2,685.7) scale(0.93,1)" font-size="16.5" text-anchor="end" stroke="#000" stroke-width="0.6">70,</text>
<line x1="71.5" y1="674.5" x2="75.5" y2="674.5" stroke="#000" stroke-width="1" />
<line x1="71.5" y1="666.5" x2="75.5" y2="666.5" stroke="#000" stroke-width="1" />
<line x1="71.5" y1="658.5" x2="75.5" y2="658.5" stroke="#000" stroke-width="1" />
<line x1="71.5" y1="650.5" x2="75.5" y2="650.5" stroke="#000" stroke-width="1" />
<text transform="translate(51,645) rotate(-90)" font-size="16.5" text-anchor="end" stroke="#000" stroke-width="0.6" letter-spacing="0">Z</text>
<g shape-rendering="crispEdges">
<rect x="377" y="906" width="17" height="52" fill="#002cff" />
<rect x="377" y="854" width="17" height="53" fill="#00ebff" />
<rect x="377" y="802" width="17" height="53" fill="#00ff55" />
<rect x="377" y="750" width="17" height="53" fill="#81ff00" />
<rect x="377" y="698" width="17" height="53" fill="#ffbe00" />
<rect x="377" y="646" width="17" height="53" fill="#ff0000" />
</g>
<line x1="394.5" y1="646" x2="394.5" y2="958" stroke="#000" stroke-width="1" />
<g clip-path="url(#pad3)">
<line x1="385" y1="957.5" x2="394.5" y2="957.5" stroke="#000" stroke-width="1" />
<text transform="translate(394.2,960.4) scale(0.93,1)" font-size="16.5" text-anchor="start" stroke="#000" stroke-width="0.6">1,</text>
<line x1="385" y1="906.5" x2="394.5" y2="906.5" stroke="#000" stroke-width="1" />
<text transform="translate(394.2,909.4) scale(0.93,1)" font-size="16.5" text-anchor="start" stroke="#000" stroke-width="0.6">2,</text>
<line x1="385" y1="854.5" x2="394.5" y2="854.5" stroke="#000" stroke-width="1" />
<text transform="translate(394.2,857.4) scale(0.93,1)" font-size="16.5" text-anchor="start" stroke="#000" stroke-width="0.6">3,</text>
<line x1="385" y1="802.5" x2="394.5" y2="802.5" stroke="#000" stroke-width="1" />
<text transform="translate(394.2,805.4) scale(0.93,1)" font-size="16.5" text-anchor="start" stroke="#000" stroke-width="0.6">4,</text>
<line x1="385" y1="750.5" x2="394.5" y2="750.5" stroke="#000" stroke-width="1" />
<text transform="translate(394.2,753.4) scale(0.93,1)" font-size="16.5" text-anchor="start" stroke="#000" stroke-width="0.6">5,</text>
<line x1="385" y1="698.5" x2="394.5" y2="698.5" stroke="#000" stroke-width="1" />
<text transform="translate(394.2,701.4) scale(0.93,1)" font-size="16.5" text-anchor="start" stroke="#000" stroke-width="0.6">6,</text>
<line x1="385" y1="646.5" x2="394.5" y2="646.5" stroke="#000" stroke-width="1" />
<text transform="translate(394.2,649.4) scale(0.93,1)" font-size="16.5" text-anchor="start" stroke="#000" stroke-width="0.6">7,</text>
</g>
<rect x="263" y="611" width="115" height="29" fill="#000" shape-rendering="crispEdges"/>
<rect x="261.5" y="609.5" width="114" height="28" fill="#fff" stroke="#000" stroke-width="1"/>
<text x="266.5" y="626.7" font-size="17" text-anchor="start" font-weight="700" letter-spacing="0.68" stroke="#000" stroke-width="0.2" >Entries 1184</text>
<rect x="476.5" y="646.5" width="304" height="311" fill="#fff" stroke="#000" stroke-width="1"/>
<g shape-rendering="crispEdges">
<rect x="727" y="953" width="14" height="5" fill="#002cff" />
<rect x="740" y="953" width="14" height="5" fill="#002cff" />
<rect x="727" y="950" width="14" height="4" fill="#00ff55" />
<rect x="740" y="950" width="14" height="4" fill="#00ff55" />
<rect x="714" y="946" width="14" height="5" fill="#00ff55" />
<rect x="727" y="946" width="14" height="5" fill="#00ff55" />
<rect x="740" y="946" width="14" height="5" fill="#00ff55" />
<rect x="714" y="942" width="14" height="5" fill="#00ff55" />
<rect x="727" y="942" width="14" height="5" fill="#00ff55" />
<rect x="740" y="942" width="14" height="5" fill="#00ff55" />
<rect x="714" y="938" width="14" height="5" fill="#81ff00" />
<rect x="727" y="938" width="14" height="5" fill="#81ff00" />
<rect x="740" y="938" width="14" height="5" fill="#81ff00" />
<rect x="714" y="934" width="14" height="5" fill="#81ff00" />
<rect x="727" y="934" width="14" height="5" fill="#81ff00" />
<rect x="740" y="934" width="14" height="5" fill="#81ff00" />
<rect x="714" y="930" width="14" height="5" fill="#00ff55" />
<rect x="727" y="930" width="14" height="5" fill="#00ff55" />
<rect x="740" y="930" width="14" height="5" fill="#00ff55" />
<rect x="714" y="926" width="14" height="5" fill="#81ff00" />
<rect x="727" y="926" width="14" height="5" fill="#81ff00" />
<rect x="740" y="926" width="14" height="5" fill="#81ff00" />
<rect x="714" y="922" width="14" height="5" fill="#81ff00" />
<rect x="727" y="922" width="14" height="5" fill="#81ff00" />
<rect x="740" y="922" width="14" height="5" fill="#81ff00" />
<rect x="700" y="918" width="15" height="5" fill="#ffbe00" />
<rect x="714" y="918" width="14" height="5" fill="#ffbe00" />
<rect x="727" y="918" width="14" height="5" fill="#ffbe00" />
<rect x="740" y="918" width="14" height="5" fill="#ffbe00" />
<rect x="700" y="914" width="15" height="5" fill="#ffbe00" />
<rect x="714" y="914" width="14" height="5" fill="#ffbe00" />
<rect x="727" y="914" width="14" height="5" fill="#ffbe00" />
<rect x="740" y="914" width="14" height="5" fill="#ffbe00" />
<rect x="700" y="910" width="15" height="5" fill="#81ff00" />
<rect x="714" y="910" width="14" height="5" fill="#81ff00" />
<rect x="727" y="910" width="14" height="5" fill="#81ff00" />
<rect x="740" y="910" width="14" height="5" fill="#81ff00" />
<rect x="687" y="906" width="14" height="5" fill="#ffbe00" />
<rect x="700" y="906" width="15" height="5" fill="#ffbe00" />
<rect x="714" y="906" width="14" height="5" fill="#ffbe00" />
<rect x="727" y="906" width="14" height="5" fill="#ffbe00" />
<rect x="740" y="906" width="14" height="5" fill="#ffbe00" />
<rect x="687" y="902" width="14" height="5" fill="#ffbe00" />
<rect x="700" y="902" width="15" height="5" fill="#ffbe00" />
<rect x="714" y="902" width="14" height="5" fill="#ffbe00" />
<rect x="727" y="902" width="14" height="5" fill="#ffbe00" />
<rect x="740" y="902" width="14" height="5" fill="#ffbe00" />
<rect x="687" y="898" width="14" height="5" fill="#ffbe00" />
<rect x="700" y="898" width="15" height="5" fill="#ffbe00" />
<rect x="714" y="898" width="14" height="5" fill="#ffbe00" />
<rect x="727" y="898" width="14" height="5" fill="#ffbe00" />
<rect x="740" y="898" width="14" height="5" fill="#ffbe00" />
<rect x="674" y="894" width="14" height="5" fill="#ffbe00" />
<rect x="687" y="894" width="14" height="5" fill="#ffbe00" />
<rect x="700" y="894" width="15" height="5" fill="#ffbe00" />
<rect x="714" y="894" width="14" height="5" fill="#ffbe00" />
<rect x="727" y="894" width="14" height="5" fill="#ffbe00" />
<rect x="674" y="890" width="14" height="5" fill="#ffbe00" />
<rect x="687" y="890" width="14" height="5" fill="#ffbe00" />
<rect x="700" y="890" width="15" height="5" fill="#ffbe00" />
<rect x="714" y="890" width="14" height="5" fill="#ffbe00" />
<rect x="674" y="887" width="14" height="4" fill="#81ff00" />
<rect x="687" y="887" width="14" height="4" fill="#81ff00" />
<rect x="700" y="887" width="15" height="4" fill="#81ff00" />
<rect x="714" y="887" width="14" height="4" fill="#81ff00" />
<rect x="661" y="883" width="14" height="5" fill="#ffbe00" />
<rect x="674" y="883" width="14" height="5" fill="#ffbe00" />
<rect x="687" y="883" width="14" height="5" fill="#ffbe00" />
<rect x="700" y="883" width="15" height="5" fill="#ffbe00" />
<rect x="714" y="883" width="14" height="5" fill="#ffbe00" />
<rect x="661" y="879" width="14" height="5" fill="#ffbe00" />
<rect x="674" y="879" width="14" height="5" fill="#ffbe00" />
<rect x="687" y="879" width="14" height="5" fill="#ffbe00" />
<rect x="700" y="879" width="15" height="5" fill="#ffbe00" />
<rect x="714" y="879" width="14" height="5" fill="#ffbe00" />
<rect x="661" y="875" width="14" height="5" fill="#81ff00" />
<rect x="674" y="875" width="14" height="5" fill="#81ff00" />
<rect x="687" y="875" width="14" height="5" fill="#81ff00" />
<rect x="700" y="875" width="15" height="5" fill="#81ff00" />
<rect x="661" y="871" width="14" height="5" fill="#81ff00" />
<rect x="674" y="871" width="14" height="5" fill="#81ff00" />
<rect x="687" y="871" width="14" height="5" fill="#81ff00" />
<rect x="700" y="871" width="15" height="5" fill="#81ff00" />
<rect x="661" y="867" width="14" height="5" fill="#ffbe00" />
<rect x="674" y="867" width="14" height="5" fill="#ffbe00" />
<rect x="687" y="867" width="14" height="5" fill="#ffbe00" />
<rect x="700" y="867" width="15" height="5" fill="#ffbe00" />
<rect x="648" y="863" width="14" height="5" fill="#ffbe00" />
<rect x="661" y="863" width="14" height="5" fill="#ffbe00" />
<rect x="674" y="863" width="14" height="5" fill="#ffbe00" />
<rect x="687" y="863" width="14" height="5" fill="#ffbe00" />
<rect x="700" y="863" width="15" height="5" fill="#ffbe00" />
<rect x="648" y="859" width="14" height="5" fill="#81ff00" />
<rect x="661" y="859" width="14" height="5" fill="#81ff00" />
<rect x="674" y="859" width="14" height="5" fill="#81ff00" />
<rect x="687" y="859" width="14" height="5" fill="#81ff00" />
<rect x="700" y="859" width="15" height="5" fill="#81ff00" />
<rect x="648" y="855" width="14" height="5" fill="#81ff00" />
<rect x="661" y="855" width="14" height="5" fill="#81ff00" />
<rect x="674" y="855" width="14" height="5" fill="#81ff00" />
<rect x="687" y="855" width="14" height="5" fill="#81ff00" />
<rect x="648" y="851" width="14" height="5" fill="#ffbe00" />
<rect x="661" y="851" width="14" height="5" fill="#ffbe00" />
<rect x="674" y="851" width="14" height="5" fill="#ffbe00" />
<rect x="687" y="851" width="14" height="5" fill="#ffbe00" />
<rect x="634" y="847" width="15" height="5" fill="#ffbe00" />
<rect x="648" y="847" width="14" height="5" fill="#ffbe00" />
<rect x="661" y="847" width="14" height="5" fill="#ffbe00" />
<rect x="674" y="847" width="14" height="5" fill="#ffbe00" />
<rect x="687" y="847" width="14" height="5" fill="#ffbe00" />
<rect x="634" y="843" width="15" height="5" fill="#81ff00" />
<rect x="648" y="843" width="14" height="5" fill="#81ff00" />
<rect x="661" y="843" width="14" height="5" fill="#81ff00" />
<rect x="674" y="843" width="14" height="5" fill="#81ff00" />
<rect x="687" y="843" width="14" height="5" fill="#81ff00" />
<rect x="634" y="839" width="15" height="5" fill="#ffbe00" />
<rect x="648" y="839" width="14" height="5" fill="#ffbe00" />
<rect x="661" y="839" width="14" height="5" fill="#ffbe00" />
<rect x="674" y="839" width="14" height="5" fill="#ffbe00" />
<rect x="634" y="835" width="15" height="5" fill="#ffbe00" />
<rect x="648" y="835" width="14" height="5" fill="#ffbe00" />
<rect x="661" y="835" width="14" height="5" fill="#ffbe00" />
<rect x="674" y="835" width="14" height="5" fill="#ffbe00" />
<rect x="621" y="831" width="14" height="5" fill="#81ff00" />
<rect x="634" y="831" width="15" height="5" fill="#81ff00" />
<rect x="648" y="831" width="14" height="5" fill="#81ff00" />
<rect x="661" y="831" width="14" height="5" fill="#81ff00" />
<rect x="621" y="827" width="14" height="5" fill="#81ff00" />
<rect x="634" y="827" width="15" height="5" fill="#81ff00" />
<rect x="648" y="827" width="14" height="5" fill="#81ff00" />
<rect x="661" y="827" width="14" height="5" fill="#81ff00" />
<rect x="608" y="824" width="14" height="4" fill="#81ff00" />
<rect x="621" y="824" width="14" height="4" fill="#81ff00" />
<rect x="634" y="824" width="15" height="4" fill="#81ff00" />
<rect x="648" y="824" width="14" height="4" fill="#81ff00" />
<rect x="661" y="824" width="14" height="4" fill="#81ff00" />
<rect x="608" y="820" width="14" height="5" fill="#ffbe00" />
<rect x="621" y="820" width="14" height="5" fill="#ffbe00" />
<rect x="634" y="820" width="15" height="5" fill="#ffbe00" />
<rect x="648" y="820" width="14" height="5" fill="#ffbe00" />
<rect x="661" y="820" width="14" height="5" fill="#ffbe00" />
<rect x="608" y="816" width="14" height="5" fill="#81ff00" />
<rect x="621" y="816" width="14" height="5" fill="#81ff00" />
<rect x="634" y="816" width="15" height="5" fill="#81ff00" />
<rect x="648" y="816" width="14" height="5" fill="#81ff00" />
<rect x="661" y="816" width="14" height="5" fill="#81ff00" />
<rect x="608" y="812" width="14" height="5" fill="#ff0000" />
<rect x="621" y="812" width="14" height="5" fill="#ff0000" />
<rect x="634" y="812" width="15" height="5" fill="#ff0000" />
<rect x="648" y="812" width="14" height="5" fill="#ff0000" />
<rect x="661" y="812" width="14" height="5" fill="#ff0000" />
<rect x="595" y="808" width="14" height="5" fill="#ffbe00" />
<rect x="608" y="808" width="14" height="5" fill="#ffbe00" />
<rect x="621" y="808" width="14" height="5" fill="#ffbe00" />
<rect x="634" y="808" width="15" height="5" fill="#ffbe00" />
<rect x="648" y="808" width="14" height="5" fill="#ffbe00" />
<rect x="661" y="808" width="14" height="5" fill="#ffbe00" />
<rect x="595" y="804" width="14" height="5" fill="#ffbe00" />
<rect x="608" y="804" width="14" height="5" fill="#ffbe00" />
<rect x="621" y="804" width="14" height="5" fill="#ffbe00" />
<rect x="634" y="804" width="15" height="5" fill="#ffbe00" />
<rect x="648" y="804" width="14" height="5" fill="#ffbe00" />
<rect x="661" y="804" width="14" height="5" fill="#ffbe00" />
<rect x="595" y="800" width="14" height="5" fill="#81ff00" />
<rect x="608" y="800" width="14" height="5" fill="#81ff00" />
<rect x="621" y="800" width="14" height="5" fill="#81ff00" />
<rect x="634" y="800" width="15" height="5" fill="#81ff00" />
<rect x="648" y="800" width="14" height="5" fill="#81ff00" />
<rect x="595" y="796" width="14" height="5" fill="#ffbe00" />
<rect x="608" y="796" width="14" height="5" fill="#ffbe00" />
<rect x="621" y="796" width="14" height="5" fill="#ffbe00" />
<rect x="634" y="796" width="15" height="5" fill="#ffbe00" />
<rect x="648" y="796" width="14" height="5" fill="#ffbe00" />
<rect x="582" y="792" width="14" height="5" fill="#ffbe00" />
<rect x="595" y="792" width="14" height="5" fill="#ffbe00" />
<rect x="608" y="792" width="14" height="5" fill="#ffbe00" />
<rect x="621" y="792" width="14" height="5" fill="#ffbe00" />
<rect x="634" y="792" width="15" height="5" fill="#ffbe00" />
<rect x="582" y="788" width="14" height="5" fill="#81ff00" />
<rect x="595" y="788" width="14" height="5" fill="#81ff00" />
<rect x="608" y="788" width="14" height="5" fill="#81ff00" />
<rect x="621" y="788" width="14" height="5" fill="#81ff00" />
<rect x="582" y="784" width="14" height="5" fill="#81ff00" />
<rect x="595" y="784" width="14" height="5" fill="#81ff00" />
<rect x="608" y="784" width="14" height="5" fill="#81ff00" />
<rect x="621" y="784" width="14" height="5" fill="#81ff00" />
<rect x="582" y="780" width="14" height="5" fill="#81ff00" />
<rect x="595" y="780" width="14" height="5" fill="#81ff00" />
<rect x="608" y="780" width="14" height="5" fill="#81ff00" />
<rect x="621" y="780" width="14" height="5" fill="#81ff00" />
<rect x="582" y="776" width="14" height="5" fill="#81ff00" />
<rect x="595" y="776" width="14" height="5" fill="#81ff00" />
<rect x="608" y="776" width="14" height="5" fill="#81ff00" />
<rect x="621" y="776" width="14" height="5" fill="#81ff00" />
<rect x="568" y="772" width="15" height="5" fill="#81ff00" />
<rect x="582" y="772" width="14" height="5" fill="#81ff00" />
<rect x="595" y="772" width="14" height="5" fill="#81ff00" />
<rect x="608" y="772" width="14" height="5" fill="#81ff00" />
<rect x="621" y="772" width="14" height="5" fill="#81ff00" />
<rect x="568" y="768" width="15" height="5" fill="#ffbe00" />
<rect x="582" y="768" width="14" height="5" fill="#ffbe00" />
<rect x="595" y="768" width="14" height="5" fill="#ffbe00" />
<rect x="608" y="768" width="14" height="5" fill="#ffbe00" />
<rect x="621" y="768" width="14" height="5" fill="#ffbe00" />
<rect x="568" y="765" width="15" height="4" fill="#81ff00" />
<rect x="582" y="765" width="14" height="4" fill="#81ff00" />
<rect x="595" y="765" width="14" height="4" fill="#81ff00" />
<rect x="608" y="765" width="14" height="4" fill="#81ff00" />
<rect x="568" y="761" width="15" height="5" fill="#81ff00" />
<rect x="582" y="761" width="14" height="5" fill="#81ff00" />
<rect x="595" y="761" width="14" height="5" fill="#81ff00" />
<rect x="608" y="761" width="14" height="5" fill="#81ff00" />
<rect x="555" y="757" width="14" height="5" fill="#ffbe00" />
<rect x="568" y="757" width="15" height="5" fill="#ffbe00" />
<rect x="582" y="757" width="14" height="5" fill="#ffbe00" />
<rect x="595" y="757" width="14" height="5" fill="#ffbe00" />
<rect x="608" y="757" width="14" height="5" fill="#ffbe00" />
<rect x="555" y="753" width="14" height="5" fill="#81ff00" />
<rect x="568" y="753" width="15" height="5" fill="#81ff00" />
<rect x="582" y="753" width="14" height="5" fill="#81ff00" />
<rect x="595" y="753" width="14" height="5" fill="#81ff00" />
<rect x="608" y="753" width="14" height="5" fill="#81ff00" />
<rect x="555" y="749" width="14" height="5" fill="#81ff00" />
<rect x="568" y="749" width="15" height="5" fill="#81ff00" />
<rect x="582" y="749" width="14" height="5" fill="#81ff00" />
<rect x="608" y="749" width="14" height="5" fill="#81ff00" />
<rect x="555" y="745" width="14" height="5" fill="#81ff00" />
<rect x="568" y="745" width="15" height="5" fill="#81ff00" />
<rect x="582" y="745" width="14" height="5" fill="#81ff00" />
<rect x="555" y="741" width="14" height="5" fill="#00ff55" />
<rect x="568" y="741" width="15" height="5" fill="#00ff55" />
<rect x="555" y="737" width="14" height="5" fill="#ffbe00" />
<rect x="568" y="737" width="15" height="5" fill="#ffbe00" />
<rect x="582" y="737" width="14" height="5" fill="#ffbe00" />
<rect x="529" y="733" width="14" height="5" fill="#81ff00" />
<rect x="555" y="733" width="14" height="5" fill="#81ff00" />
<rect x="568" y="733" width="15" height="5" fill="#81ff00" />
<rect x="529" y="729" width="14" height="5" fill="#81ff00" />
<rect x="555" y="729" width="14" height="5" fill="#81ff00" />
<rect x="529" y="725" width="14" height="5" fill="#81ff00" />
<rect x="555" y="725" width="14" height="5" fill="#81ff00" />
<rect x="529" y="721" width="14" height="5" fill="#ff0000" />
<rect x="529" y="717" width="14" height="5" fill="#81ff00" />
<rect x="515" y="713" width="15" height="5" fill="#ffbe00" />
<rect x="529" y="713" width="14" height="5" fill="#ffbe00" />
<rect x="515" y="709" width="15" height="5" fill="#ffbe00" />
<rect x="529" y="709" width="14" height="5" fill="#ffbe00" />
<rect x="515" y="705" width="15" height="5" fill="#81ff00" />
<rect x="529" y="705" width="14" height="5" fill="#81ff00" />
<rect x="515" y="702" width="15" height="4" fill="#ffbe00" />
<rect x="529" y="702" width="14" height="4" fill="#ffbe00" />
<rect x="515" y="698" width="15" height="5" fill="#ffbe00" />
<rect x="529" y="698" width="14" height="5" fill="#ffbe00" />
<rect x="502" y="694" width="14" height="5" fill="#00ff55" />
<rect x="515" y="694" width="15" height="5" fill="#00ff55" />
<rect x="529" y="694" width="14" height="5" fill="#00ff55" />
<rect x="515" y="690" width="15" height="5" fill="#00ff55" />
<rect x="529" y="690" width="14" height="5" fill="#00ff55" />
<rect x="502" y="686" width="14" height="5" fill="#00ebff" />
<rect x="515" y="686" width="15" height="5" fill="#00ebff" />
<rect x="529" y="686" width="14" height="5" fill="#00ebff" />
<rect x="502" y="682" width="14" height="5" fill="#002cff" />
<rect x="515" y="682" width="15" height="5" fill="#002cff" />
<rect x="529" y="682" width="14" height="5" fill="#002cff" />
<rect x="502" y="678" width="14" height="5" fill="#002cff" />
<rect x="515" y="678" width="15" height="5" fill="#002cff" />
<rect x="529" y="678" width="14" height="5" fill="#002cff" />
<rect x="502" y="674" width="14" height="5" fill="#00ebff" />
<rect x="515" y="674" width="15" height="5" fill="#00ebff" />
<rect x="529" y="674" width="14" height="5" fill="#00ebff" />
<rect x="502" y="670" width="14" height="5" fill="#002cff" />
<rect x="515" y="670" width="15" height="5" fill="#002cff" />
<rect x="529" y="670" width="14" height="5" fill="#002cff" />
<rect x="502" y="666" width="14" height="5" fill="#81ff00" />
<rect x="515" y="666" width="15" height="5" fill="#81ff00" />
<rect x="502" y="662" width="14" height="5" fill="#81ff00" />
<rect x="515" y="662" width="15" height="5" fill="#81ff00" />
<rect x="529" y="662" width="14" height="5" fill="#81ff00" />
<rect x="502" y="658" width="14" height="5" fill="#00ff55" />
<rect x="502" y="654" width="14" height="5" fill="#00ebff" />
<rect x="529" y="654" width="14" height="5" fill="#00ebff" />
</g>
<rect x="476.5" y="646.5" width="304" height="311" fill="none" stroke="#000" stroke-width="1"/>
<line x1="476.5" y1="957.5" x2="476.5" y2="953.5" stroke="#000" stroke-width="1" />
<line x1="489.5" y1="957.5" x2="489.5" y2="953.5" stroke="#000" stroke-width="1" />
<line x1="502.5" y1="957.5" x2="502.5" y2="953.5" stroke="#000" stroke-width="1" />
<line x1="515.5" y1="957.5" x2="515.5" y2="948.5" stroke="#000" stroke-width="1" />
<text transform="translate(515.5,971) scale(0.93,1)" font-size="16.5" text-anchor="middle" stroke="#000" stroke-width="0.6">65,</text>
<line x1="529.5" y1="957.5" x2="529.5" y2="953.5" stroke="#000" stroke-width="1" />
<line x1="542.5" y1="957.5" x2="542.5" y2="953.5" stroke="#000" stroke-width="1" />
<line x1="555.5" y1="957.5" x2="555.5" y2="953.5" stroke="#000" stroke-width="1" />
<line x1="568.5" y1="957.5" x2="568.5" y2="953.5" stroke="#000" stroke-width="1" />
<line x1="582.5" y1="957.5" x2="582.5" y2="948.5" stroke="#000" stroke-width="1" />
<text transform="translate(582.5,971) scale(0.93,1)" font-size="16.5" text-anchor="middle" stroke="#000" stroke-width="0.6">70,</text>
<line x1="595.5" y1="957.5" x2="595.5" y2="953.5" stroke="#000" stroke-width="1" />
<line x1="608.5" y1="957.5" x2="608.5" y2="953.5" stroke="#000" stroke-width="1" />
<line x1="621.5" y1="957.5" x2="621.5" y2="953.5" stroke="#000" stroke-width="1" />
<line x1="634.5" y1="957.5" x2="634.5" y2="953.5" stroke="#000" stroke-width="1" />
<line x1="648.5" y1="957.5" x2="648.5" y2="948.5" stroke="#000" stroke-width="1" />
<text transform="translate(648.5,971) scale(0.93,1)" font-size="16.5" text-anchor="middle" stroke="#000" stroke-width="0.6">75,</text>
<line x1="661.5" y1="957.5" x2="661.5" y2="953.5" stroke="#000" stroke-width="1" />
<line x1="674.5" y1="957.5" x2="674.5" y2="953.5" stroke="#000" stroke-width="1" />
<line x1="687.5" y1="957.5" x2="687.5" y2="953.5" stroke="#000" stroke-width="1" />
<line x1="700.5" y1="957.5" x2="700.5" y2="953.5" stroke="#000" stroke-width="1" />
<line x1="714.5" y1="957.5" x2="714.5" y2="948.5" stroke="#000" stroke-width="1" />
<text transform="translate(714.5,971) scale(0.93,1)" font-size="16.5" text-anchor="middle" stroke="#000" stroke-width="0.6">80,</text>
<line x1="727.5" y1="957.5" x2="727.5" y2="953.5" stroke="#000" stroke-width="1" />
<line x1="740.5" y1="957.5" x2="740.5" y2="953.5" stroke="#000" stroke-width="1" />
<line x1="753.5" y1="957.5" x2="753.5" y2="953.5" stroke="#000" stroke-width="1" />
<line x1="767.5" y1="957.5" x2="767.5" y2="953.5" stroke="#000" stroke-width="1" />
<line x1="780.5" y1="957.5" x2="780.5" y2="948.5" stroke="#000" stroke-width="1" />
<text transform="translate(780.5,971) scale(0.93,1)" font-size="16.5" text-anchor="middle" stroke="#000" stroke-width="0.6">85,</text>
<text x="779" y="987" font-size="16.5" text-anchor="end" stroke="#000" stroke-width="0.45">Y</text>
<line x1="476.5" y1="957.5" x2="485.5" y2="957.5" stroke="#000" stroke-width="1" />
<text transform="translate(476.2,960.7) scale(0.93,1)" font-size="16.5" text-anchor="end" stroke="#000" stroke-width="0.6">0,</text>
<line x1="476.5" y1="949.5" x2="480.5" y2="949.5" stroke="#000" stroke-width="1" />
<line x1="476.5" y1="942.5" x2="480.5" y2="942.5" stroke="#000" stroke-width="1" />
<line x1="476.5" y1="934.5" x2="480.5" y2="934.5" stroke="#000" stroke-width="1" />
<line x1="476.5" y1="926.5" x2="480.5" y2="926.5" stroke="#000" stroke-width="1" />
<line x1="476.5" y1="918.5" x2="485.5" y2="918.5" stroke="#000" stroke-width="1" />
<text transform="translate(476.2,921.7) scale(0.93,1)" font-size="16.5" text-anchor="end" stroke="#000" stroke-width="0.6">10,</text>
<line x1="476.5" y1="910.5" x2="480.5" y2="910.5" stroke="#000" stroke-width="1" />
<line x1="476.5" y1="902.5" x2="480.5" y2="902.5" stroke="#000" stroke-width="1" />
<line x1="476.5" y1="894.5" x2="480.5" y2="894.5" stroke="#000" stroke-width="1" />
<line x1="476.5" y1="886.5" x2="480.5" y2="886.5" stroke="#000" stroke-width="1" />
<line x1="476.5" y1="879.5" x2="485.5" y2="879.5" stroke="#000" stroke-width="1" />
<text transform="translate(476.2,882.7) scale(0.93,1)" font-size="16.5" text-anchor="end" stroke="#000" stroke-width="0.6">20,</text>
<line x1="476.5" y1="871.5" x2="480.5" y2="871.5" stroke="#000" stroke-width="1" />
<line x1="476.5" y1="863.5" x2="480.5" y2="863.5" stroke="#000" stroke-width="1" />
<line x1="476.5" y1="855.5" x2="480.5" y2="855.5" stroke="#000" stroke-width="1" />
<line x1="476.5" y1="847.5" x2="480.5" y2="847.5" stroke="#000" stroke-width="1" />
<line x1="476.5" y1="839.5" x2="485.5" y2="839.5" stroke="#000" stroke-width="1" />
<text transform="translate(476.2,842.7) scale(0.93,1)" font-size="16.5" text-anchor="end" stroke="#000" stroke-width="0.6">30,</text>
<line x1="476.5" y1="831.5" x2="480.5" y2="831.5" stroke="#000" stroke-width="1" />
<line x1="476.5" y1="823.5" x2="480.5" y2="823.5" stroke="#000" stroke-width="1" />
<line x1="476.5" y1="816.5" x2="480.5" y2="816.5" stroke="#000" stroke-width="1" />
<line x1="476.5" y1="808.5" x2="480.5" y2="808.5" stroke="#000" stroke-width="1" />
<line x1="476.5" y1="800.5" x2="485.5" y2="800.5" stroke="#000" stroke-width="1" />
<text transform="translate(476.2,803.7) scale(0.93,1)" font-size="16.5" text-anchor="end" stroke="#000" stroke-width="0.6">40,</text>
<line x1="476.5" y1="792.5" x2="480.5" y2="792.5" stroke="#000" stroke-width="1" />
<line x1="476.5" y1="784.5" x2="480.5" y2="784.5" stroke="#000" stroke-width="1" />
<line x1="476.5" y1="776.5" x2="480.5" y2="776.5" stroke="#000" stroke-width="1" />
<line x1="476.5" y1="768.5" x2="480.5" y2="768.5" stroke="#000" stroke-width="1" />
<line x1="476.5" y1="760.5" x2="485.5" y2="760.5" stroke="#000" stroke-width="1" />
<text transform="translate(476.2,763.7) scale(0.93,1)" font-size="16.5" text-anchor="end" stroke="#000" stroke-width="0.6">50,</text>
<line x1="476.5" y1="753.5" x2="480.5" y2="753.5" stroke="#000" stroke-width="1" />
<line x1="476.5" y1="745.5" x2="480.5" y2="745.5" stroke="#000" stroke-width="1" />
<line x1="476.5" y1="737.5" x2="480.5" y2="737.5" stroke="#000" stroke-width="1" />
<line x1="476.5" y1="729.5" x2="480.5" y2="729.5" stroke="#000" stroke-width="1" />
<line x1="476.5" y1="721.5" x2="485.5" y2="721.5" stroke="#000" stroke-width="1" />
<text transform="translate(476.2,724.7) scale(0.93,1)" font-size="16.5" text-anchor="end" stroke="#000" stroke-width="0.6">60,</text>
<line x1="476.5" y1="713.5" x2="480.5" y2="713.5" stroke="#000" stroke-width="1" />
<line x1="476.5" y1="705.5" x2="480.5" y2="705.5" stroke="#000" stroke-width="1" />
<line x1="476.5" y1="697.5" x2="480.5" y2="697.5" stroke="#000" stroke-width="1" />
<line x1="476.5" y1="690.5" x2="480.5" y2="690.5" stroke="#000" stroke-width="1" />
<line x1="476.5" y1="682.5" x2="485.5" y2="682.5" stroke="#000" stroke-width="1" />
<text transform="translate(476.2,685.7) scale(0.93,1)" font-size="16.5" text-anchor="end" stroke="#000" stroke-width="0.6">70,</text>
<line x1="476.5" y1="674.5" x2="480.5" y2="674.5" stroke="#000" stroke-width="1" />
<line x1="476.5" y1="666.5" x2="480.5" y2="666.5" stroke="#000" stroke-width="1" />
<line x1="476.5" y1="658.5" x2="480.5" y2="658.5" stroke="#000" stroke-width="1" />
<line x1="476.5" y1="650.5" x2="480.5" y2="650.5" stroke="#000" stroke-width="1" />
<text transform="translate(456,645) rotate(-90)" font-size="16.5" text-anchor="end" stroke="#000" stroke-width="0.6" letter-spacing="0">Z</text>
<g shape-rendering="crispEdges">
<rect x="782" y="906" width="17" height="52" fill="#002cff" />
<rect x="782" y="854" width="17" height="53" fill="#00ebff" />
<rect x="782" y="802" width="17" height="53" fill="#00ff55" />
<rect x="782" y="750" width="17" height="53" fill="#81ff00" />
<rect x="782" y="698" width="17" height="53" fill="#ffbe00" />
<rect x="782" y="646" width="17" height="53" fill="#ff0000" />
</g>
<line x1="799.5" y1="646" x2="799.5" y2="958" stroke="#000" stroke-width="1" />
<g clip-path="url(#pad4)">
<line x1="790" y1="957.5" x2="799.5" y2="957.5" stroke="#000" stroke-width="1" />
<text transform="translate(799.2,960.4) scale(0.93,1)" font-size="16.5" text-anchor="start" stroke="#000" stroke-width="0.6">1,</text>
<line x1="790" y1="906.5" x2="799.5" y2="906.5" stroke="#000" stroke-width="1" />
<text transform="translate(799.2,909.4) scale(0.93,1)" font-size="16.5" text-anchor="start" stroke="#000" stroke-width="0.6">2,</text>
<line x1="790" y1="854.5" x2="799.5" y2="854.5" stroke="#000" stroke-width="1" />
<text transform="translate(799.2,857.4) scale(0.93,1)" font-size="16.5" text-anchor="start" stroke="#000" stroke-width="0.6">3,</text>
<line x1="790" y1="802.5" x2="799.5" y2="802.5" stroke="#000" stroke-width="1" />
<text transform="translate(799.2,805.4) scale(0.93,1)" font-size="16.5" text-anchor="start" stroke="#000" stroke-width="0.6">4,</text>
<line x1="790" y1="750.5" x2="799.5" y2="750.5" stroke="#000" stroke-width="1" />
<text transform="translate(799.2,753.4) scale(0.93,1)" font-size="16.5" text-anchor="start" stroke="#000" stroke-width="0.6">5,</text>
<line x1="790" y1="698.5" x2="799.5" y2="698.5" stroke="#000" stroke-width="1" />
<text transform="translate(799.2,701.4) scale(0.93,1)" font-size="16.5" text-anchor="start" stroke="#000" stroke-width="0.6">6,</text>
<line x1="790" y1="646.5" x2="799.5" y2="646.5" stroke="#000" stroke-width="1" />
<text transform="translate(799.2,649.4) scale(0.93,1)" font-size="16.5" text-anchor="start" stroke="#000" stroke-width="0.6">7,</text>
</g>
<rect x="668" y="611" width="115" height="29" fill="#000" shape-rendering="crispEdges"/>
<rect x="666.5" y="609.5" width="114" height="28" fill="#fff" stroke="#000" stroke-width="1"/>
<text x="671.5" y="626.7" font-size="17" text-anchor="start" font-weight="700" letter-spacing="0.68" stroke="#000" stroke-width="0.2" >Entries 1184</text>
<rect x="881.5" y="646.5" width="304" height="311" fill="#fff" stroke="#000" stroke-width="1"/>
<line x1="881.5" y1="957.5" x2="881.5" y2="948.5" stroke="#000" stroke-width="1" />
<text transform="translate(881.5,971) scale(0.93,1)" font-size="16.5" text-anchor="middle" stroke="#000" stroke-width="0.6">0,</text>
<line x1="894.5" y1="957.5" x2="894.5" y2="953.5" stroke="#000" stroke-width="1" />
<line x1="908.5" y1="957.5" x2="908.5" y2="953.5" stroke="#000" stroke-width="1" />
<line x1="922.5" y1="957.5" x2="922.5" y2="953.5" stroke="#000" stroke-width="1" />
<line x1="936.5" y1="957.5" x2="936.5" y2="948.5" stroke="#000" stroke-width="1" />
<text transform="translate(936.5,971) scale(0.93,1)" font-size="16.5" text-anchor="middle" stroke="#000" stroke-width="0.6">20,</text>
<line x1="949.5" y1="957.5" x2="949.5" y2="953.5" stroke="#000" stroke-width="1" />
<line x1="963.5" y1="957.5" x2="963.5" y2="953.5" stroke="#000" stroke-width="1" />
<line x1="977.5" y1="957.5" x2="977.5" y2="953.5" stroke="#000" stroke-width="1" />
<line x1="990.5" y1="957.5" x2="990.5" y2="948.5" stroke="#000" stroke-width="1" />
<text transform="translate(990.5,971) scale(0.93,1)" font-size="16.5" text-anchor="middle" stroke="#000" stroke-width="0.6">40,</text>
<line x1="1004.5" y1="957.5" x2="1004.5" y2="953.5" stroke="#000" stroke-width="1" />
<line x1="1018.5" y1="957.5" x2="1018.5" y2="953.5" stroke="#000" stroke-width="1" />
<line x1="1031.5" y1="957.5" x2="1031.5" y2="953.5" stroke="#000" stroke-width="1" />
<line x1="1045.5" y1="957.5" x2="1045.5" y2="948.5" stroke="#000" stroke-width="1" />
<text transform="translate(1045.5,971) scale(0.93,1)" font-size="16.5" text-anchor="middle" stroke="#000" stroke-width="0.6">60,</text>
<line x1="1059.5" y1="957.5" x2="1059.5" y2="953.5" stroke="#000" stroke-width="1" />
<line x1="1072.5" y1="957.5" x2="1072.5" y2="953.5" stroke="#000" stroke-width="1" />
<line x1="1086.5" y1="957.5" x2="1086.5" y2="953.5" stroke="#000" stroke-width="1" />
<line x1="1100.5" y1="957.5" x2="1100.5" y2="948.5" stroke="#000" stroke-width="1" />
<text transform="translate(1100.5,971) scale(0.93,1)" font-size="16.5" text-anchor="middle" stroke="#000" stroke-width="0.6">80,</text>
<line x1="1113.5" y1="957.5" x2="1113.5" y2="953.5" stroke="#000" stroke-width="1" />
<line x1="1127.5" y1="957.5" x2="1127.5" y2="953.5" stroke="#000" stroke-width="1" />
<line x1="1141.5" y1="957.5" x2="1141.5" y2="953.5" stroke="#000" stroke-width="1" />
<line x1="1154.5" y1="957.5" x2="1154.5" y2="948.5" stroke="#000" stroke-width="1" />
<text transform="translate(1154.5,971) scale(0.93,1)" font-size="16.5" text-anchor="middle" stroke="#000" stroke-width="0.6">100,</text>
<line x1="1168.5" y1="957.5" x2="1168.5" y2="953.5" stroke="#000" stroke-width="1" />
<line x1="1182.5" y1="957.5" x2="1182.5" y2="953.5" stroke="#000" stroke-width="1" />
<text x="1184" y="987" font-size="16.5" text-anchor="end" stroke="#000" stroke-width="0.45">n</text>
<line x1="881.5" y1="955.5" x2="890.5" y2="955.5" stroke="#000" stroke-width="1" />
<text transform="translate(881.8,958.7) scale(0.93,1)" font-size="16.5" text-anchor="end" stroke="#000" stroke-width="0.6"><tspan letter-spacing="-1.2">-</tspan>2,</text>
<line x1="881.5" y1="943.5" x2="885.5" y2="943.5" stroke="#000" stroke-width="1" />
<line x1="881.5" y1="931.5" x2="885.5" y2="931.5" stroke="#000" stroke-width="1" />
<line x1="881.5" y1="920.5" x2="885.5" y2="920.5" stroke="#000" stroke-width="1" />
<line x1="881.5" y1="908.5" x2="890.5" y2="908.5" stroke="#000" stroke-width="1" />
<text transform="translate(881.8,911.7) scale(0.93,1)" font-size="16.5" text-anchor="end" stroke="#000" stroke-width="0.6">0,</text>
<line x1="881.5" y1="896.5" x2="885.5" y2="896.5" stroke="#000" stroke-width="1" />
<line x1="881.5" y1="884.5" x2="885.5" y2="884.5" stroke="#000" stroke-width="1" />
<line x1="881.5" y1="872.5" x2="885.5" y2="872.5" stroke="#000" stroke-width="1" />
<line x1="881.5" y1="861.5" x2="890.5" y2="861.5" stroke="#000" stroke-width="1" />
<text transform="translate(881.8,864.7) scale(0.93,1)" font-size="16.5" text-anchor="end" stroke="#000" stroke-width="0.6">2,</text>
<line x1="881.5" y1="849.5" x2="885.5" y2="849.5" stroke="#000" stroke-width="1" />
<line x1="881.5" y1="837.5" x2="885.5" y2="837.5" stroke="#000" stroke-width="1" />
<line x1="881.5" y1="825.5" x2="885.5" y2="825.5" stroke="#000" stroke-width="1" />
<line x1="881.5" y1="814.5" x2="890.5" y2="814.5" stroke="#000" stroke-width="1" />
<text transform="translate(881.8,817.7) scale(0.93,1)" font-size="16.5" text-anchor="end" stroke="#000" stroke-width="0.6">4,</text>
<line x1="881.5" y1="802.5" x2="885.5" y2="802.5" stroke="#000" stroke-width="1" />
<line x1="881.5" y1="790.5" x2="885.5" y2="790.5" stroke="#000" stroke-width="1" />
<line x1="881.5" y1="778.5" x2="885.5" y2="778.5" stroke="#000" stroke-width="1" />
<line x1="881.5" y1="766.5" x2="890.5" y2="766.5" stroke="#000" stroke-width="1" />
<text transform="translate(881.8,769.7) scale(0.93,1)" font-size="16.5" text-anchor="end" stroke="#000" stroke-width="0.6">6,</text>
<line x1="881.5" y1="755.5" x2="885.5" y2="755.5" stroke="#000" stroke-width="1" />
<line x1="881.5" y1="743.5" x2="885.5" y2="743.5" stroke="#000" stroke-width="1" />
<line x1="881.5" y1="731.5" x2="885.5" y2="731.5" stroke="#000" stroke-width="1" />
<line x1="881.5" y1="719.5" x2="890.5" y2="719.5" stroke="#000" stroke-width="1" />
<text transform="translate(881.8,722.7) scale(0.93,1)" font-size="16.5" text-anchor="end" stroke="#000" stroke-width="0.6">8,</text>
<line x1="881.5" y1="708.5" x2="885.5" y2="708.5" stroke="#000" stroke-width="1" />
<line x1="881.5" y1="696.5" x2="885.5" y2="696.5" stroke="#000" stroke-width="1" />
<line x1="881.5" y1="684.5" x2="885.5" y2="684.5" stroke="#000" stroke-width="1" />
<line x1="881.5" y1="672.5" x2="890.5" y2="672.5" stroke="#000" stroke-width="1" />
<text transform="translate(881.8,675.7) scale(0.93,1)" font-size="16.5" text-anchor="end" stroke="#000" stroke-width="0.6">10,</text>
<line x1="881.5" y1="660.5" x2="885.5" y2="660.5" stroke="#000" stroke-width="1" />
<line x1="881.5" y1="649.5" x2="885.5" y2="649.5" stroke="#000" stroke-width="1" />
<text transform="translate(859,642) rotate(-90)" font-size="16.5" text-anchor="end" stroke="#000" stroke-width="0.6" letter-spacing="0">ampl</text>
<polyline fill="none" shape-rendering="crispEdges" stroke="#000" stroke-width="1" points="881.5,908.0 884.2,931.6 887.0,908.0 889.7,931.6 892.4,931.6 895.2,908.0 897.9,931.6 900.7,908.0 903.4,908.0 906.1,884.5 908.9,884.5 911.6,860.9 914.3,837.3 917.1,837.3 919.8,790.2 922.5,790.2 925.3,743.1 928.0,743.1 930.8,743.1 933.5,696.0 936.2,696.0 939.0,696.0 941.7,696.0 944.4,696.0 947.2,672.4 949.9,696.0 952.6,672.4 955.4,672.4 958.1,696.0 960.9,696.0 963.6,672.4 966.3,696.0 969.1,696.0 971.8,672.4 974.5,719.5 977.3,696.0 980.0,696.0 982.7,719.5 985.5,743.1 988.2,719.5 991.0,743.1 993.7,743.1 996.4,743.1 999.2,766.7 1001.9,766.7 1004.6,766.7 1007.4,766.7 1010.1,790.2 1012.8,790.2 1015.6,790.2 1018.3,790.2 1021.0,790.2 1023.8,813.8 1026.5,790.2 1029.3,813.8 1032.0,813.8 1034.7,813.8 1037.5,837.3 1040.2,813.8 1042.9,837.3 1045.7,837.3 1048.4,837.3 1051.1,837.3 1053.9,837.3 1056.6,860.9 1059.4,860.9 1062.1,860.9 1064.8,837.3 1067.6,860.9 1070.3,884.5 1073.0,860.9 1075.8,860.9 1078.5,860.9 1081.2,884.5 1084.0,860.9 1086.7,860.9 1089.5,884.5 1092.2,860.9 1094.9,884.5 1097.7,884.5 1100.4,884.5 1103.1,884.5 1105.9,884.5 1108.6,884.5 1111.3,884.5 1114.1,884.5 1116.8,908.0 1119.6,884.5 1122.3,908.0 1125.0,884.5 1127.8,908.0 1130.5,908.0 1133.2,908.0 1136.0,908.0 1138.7,884.5 1141.4,908.0 1144.2,908.0 1146.9,908.0 1149.7,908.0 1152.4,908.0 1155.1,908.0 1157.9,908.0" />
<g fill="#000"><circle cx="881.5" cy="908.0" r="4.2"/><circle cx="884.2" cy="931.6" r="4.2"/><circle cx="887.0" cy="908.0" r="4.2"/><circle cx="889.7" cy="931.6" r="4.2"/><circle cx="892.4" cy="931.6" r="4.2"/><circle cx="895.2" cy="908.0" r="4.2"/><circle cx="897.9" cy="931.6" r="4.2"/><circle cx="900.7" cy="908.0" r="4.2"/><circle cx="903.4" cy="908.0" r="4.2"/><circle cx="906.1" cy="884.5" r="4.2"/><circle cx="908.9" cy="884.5" r="4.2"/><circle cx="911.6" cy="860.9" r="4.2"/><circle cx="914.3" cy="837.3" r="4.2"/><circle cx="917.1" cy="837.3" r="4.2"/><circle cx="919.8" cy="790.2" r="4.2"/><circle cx="922.5" cy="790.2" r="4.2"/><circle cx="925.3" cy="743.1" r="4.2"/><circle cx="928.0" cy="743.1" r="4.2"/><circle cx="930.8" cy="743.1" r="4.2"/><circle cx="933.5" cy="696.0" r="4.2"/><circle cx="936.2" cy="696.0" r="4.2"/><circle cx="939.0" cy="696.0" r="4.2"/><circle cx="941.7" cy="696.0" r="4.2"/><circle cx="944.4" cy="696.0" r="4.2"/><circle cx="947.2" cy="672.4" r="4.2"/><circle cx="949.9" cy="696.0" r="4.2"/><circle cx="952.6" cy="672.4" r="4.2"/><circle cx="955.4" cy="672.4" r="4.2"/><circle cx="958.1" cy="696.0" r="4.2"/><circle cx="960.9" cy="696.0" r="4.2"/><circle cx="963.6" cy="672.4" r="4.2"/><circle cx="966.3" cy="696.0" r="4.2"/><circle cx="969.1" cy="696.0" r="4.2"/><circle cx="971.8" cy="672.4" r="4.2"/><circle cx="974.5" cy="719.5" r="4.2"/><circle cx="977.3" cy="696.0" r="4.2"/><circle cx="980.0" cy="696.0" r="4.2"/><circle cx="982.7" cy="719.5" r="4.2"/><circle cx="985.5" cy="743.1" r="4.2"/><circle cx="988.2" cy="719.5" r="4.2"/><circle cx="991.0" cy="743.1" r="4.2"/><circle cx="993.7" cy="743.1" r="4.2"/><circle cx="996.4" cy="743.1" r="4.2"/><circle cx="999.2" cy="766.7" r="4.2"/><circle cx="1001.9" cy="766.7" r="4.2"/><circle cx="1004.6" cy="766.7" r="4.2"/><circle cx="1007.4" cy="766.7" r="4.2"/><circle cx="1010.1" cy="790.2" r="4.2"/><circle cx="1012.8" cy="790.2" r="4.2"/><circle cx="1015.6" cy="790.2" r="4.2"/><circle cx="1018.3" cy="790.2" r="4.2"/><circle cx="1021.0" cy="790.2" r="4.2"/><circle cx="1023.8" cy="813.8" r="4.2"/><circle cx="1026.5" cy="790.2" r="4.2"/><circle cx="1029.3" cy="813.8" r="4.2"/><circle cx="1032.0" cy="813.8" r="4.2"/><circle cx="1034.7" cy="813.8" r="4.2"/><circle cx="1037.5" cy="837.3" r="4.2"/><circle cx="1040.2" cy="813.8" r="4.2"/><circle cx="1042.9" cy="837.3" r="4.2"/><circle cx="1045.7" cy="837.3" r="4.2"/><circle cx="1048.4" cy="837.3" r="4.2"/><circle cx="1051.1" cy="837.3" r="4.2"/><circle cx="1053.9" cy="837.3" r="4.2"/><circle cx="1056.6" cy="860.9" r="4.2"/><circle cx="1059.4" cy="860.9" r="4.2"/><circle cx="1062.1" cy="860.9" r="4.2"/><circle cx="1064.8" cy="837.3" r="4.2"/><circle cx="1067.6" cy="860.9" r="4.2"/><circle cx="1070.3" cy="884.5" r="4.2"/><circle cx="1073.0" cy="860.9" r="4.2"/><circle cx="1075.8" cy="860.9" r="4.2"/><circle cx="1078.5" cy="860.9" r="4.2"/><circle cx="1081.2" cy="884.5" r="4.2"/><circle cx="1084.0" cy="860.9" r="4.2"/><circle cx="1086.7" cy="860.9" r="4.2"/><circle cx="1089.5" cy="884.5" r="4.2"/><circle cx="1092.2" cy="860.9" r="4.2"/><circle cx="1094.9" cy="884.5" r="4.2"/><circle cx="1097.7" cy="884.5" r="4.2"/><circle cx="1100.4" cy="884.5" r="4.2"/><circle cx="1103.1" cy="884.5" r="4.2"/><circle cx="1105.9" cy="884.5" r="4.2"/><circle cx="1108.6" cy="884.5" r="4.2"/><circle cx="1111.3" cy="884.5" r="4.2"/><circle cx="1114.1" cy="884.5" r="4.2"/><circle cx="1116.8" cy="908.0" r="4.2"/><circle cx="1119.6" cy="884.5" r="4.2"/><circle cx="1122.3" cy="908.0" r="4.2"/><circle cx="1125.0" cy="884.5" r="4.2"/><circle cx="1127.8" cy="908.0" r="4.2"/><circle cx="1130.5" cy="908.0" r="4.2"/><circle cx="1133.2" cy="908.0" r="4.2"/><circle cx="1136.0" cy="908.0" r="4.2"/><circle cx="1138.7" cy="884.5" r="4.2"/><circle cx="1141.4" cy="908.0" r="4.2"/><circle cx="1144.2" cy="908.0" r="4.2"/><circle cx="1146.9" cy="908.0" r="4.2"/><circle cx="1149.7" cy="908.0" r="4.2"/><circle cx="1152.4" cy="908.0" r="4.2"/><circle cx="1155.1" cy="908.0" r="4.2"/><circle cx="1157.9" cy="908.0" r="4.2"/></g>
<text x="856" y="623.9" font-size="15.8" letter-spacing="0.65" stroke="#000" stroke-width="0.55">HP event</text>
<path d="M781.6 719.2 L781.6 734.2 L785.2 731 L788 736.6 L790.6 735.2 L787.8 729.8 L792.8 729.8 Z" fill="#000" opacity=".25"/>
<path d="M780.6 717.6 L780.6 733 L784.3 729.8 L787.1 735.4 L789.4 734.2 L786.7 728.7 L791.6 728.7 Z" fill="#fff" stroke="#000" stroke-width="1.1" stroke-linejoin="round"/></svg>
<div class="abs" style="left:0;top:1032px;width:1257px;height:16px;background:linear-gradient(#4d4c47,#3b3a36)"></div>
<div class="abs" style="left:-4px;top:1033px;color:#e6e2d9;font-size:14px;line-height:18px;white-space:pre;letter-spacing:.55px">nimac@lpsc2079x: /...</div>
<div class="abs" style="left:154px;top:1032px;width:1px;height:16px;background:#2c2b28"></div>
<div class="abs" style="left:155px;top:1032px;width:1px;height:16px;background:#55544f"></div>
<svg class="abs" style="left:162px;top:1037px" width="18" height="11"><rect x="1.5" y="1.5" width="12" height="12" fill="#f4f4f2" stroke="#888"/><path d="M3 4.5h8M3 6.5h8M3 8.5h6" stroke="#777" stroke-width="1"/><path d="M7 11 L15 2 L17 4 L9 12 Z" fill="#e8c34a" stroke="#444" stroke-width=".8"/><path d="M14.5 2.5 L16.5 0.8 L18 2.4 L16.3 4.2Z" fill="#e48bb0"/></svg>
<div class="abs" style="left:186px;top:1033px;color:#e6e2d9;font-size:14px;line-height:18px;white-space:pre;letter-spacing:.55px">param_ASIC.txt (/ho...</div>
<div class="abs" style="left:351px;top:1032px;width:197px;height:16px;background:linear-gradient(#2f2e2b,#292826)"></div>
<div class="abs" style="left:360px;top:1039px;width:14px;height:9px;background:#d8d5ce"></div>
<div class="abs" style="left:360px;top:1039px;width:14px;height:2px;background:#3a62a6"></div>
<div class="abs" style="left:383px;top:1033px;color:#e6e2d9;font-size:14px;line-height:18px;white-space:pre;letter-spacing:.55px;color:#fff">VisuMiMac : /mnt/da...</div>
<div class="abs" style="left:970px;top:1033px;width:260px;height:15px;background:#343330"></div>
<div class="abs" style="left:970px;top:1033px;width:40px;height:15px;background:#ee7748"></div>
<div class="abs" style="left:984px;top:1034px;width:25px;height:14px;background:#f7a888"></div>
<div class="abs" style="left:971px;top:1044px;width:12px;height:1px;background:#f9c0a8"></div>
<div class="abs" style="left:989px;top:1037px;width:14px;height:11px;background:#f2f1ee;border-top:2px solid #2c55a0;box-sizing:border-box;border-left:1px solid #2c55a0;border-right:1px solid #2c55a0"></div>
<div class="abs" style="left:1010px;top:1033px;width:24px;height:15px;box-sizing:border-box;border:1px solid #ee7748;border-bottom:0;background:#f3b79e"></div>
<svg class="abs" style="left:1014px;top:1036px" width="18" height="12"><rect x="1.5" y="1.5" width="12" height="12" fill="#fafaf8" stroke="#999"/><path d="M3 4.5h8M3 6.5h8M3 8.5h6" stroke="#666" stroke-width="1"/><path d="M7 11 L14.5 2 L16.5 4 L9 12 Z" fill="#3a3a3a"/><path d="M14 2.5 L16 .8 L17.5 2.4 L15.8 4.2Z" fill="#e48bb0"/></svg>
<div class="abs" style="left:1034px;top:1033px;width:1px;height:15px;background:#45443f"></div>
<div class="abs" style="left:1100px;top:1033px;width:1px;height:15px;background:#45443f"></div>
<div class="abs" style="left:1165px;top:1033px;width:1px;height:15px;background:#45443f"></div>
<div class="abs" style="left:1230px;top:1033px;width:1px;height:15px;background:#45443f"></div>
<svg class="abs" style="left:1234px;top:1033px" width="20" height="15"><path d="M1.5 2.5 h17 l-1.5 13 h-14 z" fill="#8d8d89" stroke="#b9b9b5"/><ellipse cx="10" cy="2.5" rx="8.5" ry="1.6" fill="#6d6d69" stroke="#c4c4c0"/><path d="M5 6 l1 8 M8.5 6 l.3 8 M12 6 l-.4 8 M15 6 l-1 8" stroke="#c9c9c5" stroke-width="1"/></svg>
<svg class="abs" style="left:1246px;top:1024px" width="8" height="8"><path d="M7.5 1 L1 7.5 M7.5 4 L4 7.5" stroke="#8a867c" stroke-width="1"/><path d="M7.5 2 L2 7.5 M7.5 5 L5 7.5" stroke="#fff" stroke-width="1"/></svg>
</div></body></html>
